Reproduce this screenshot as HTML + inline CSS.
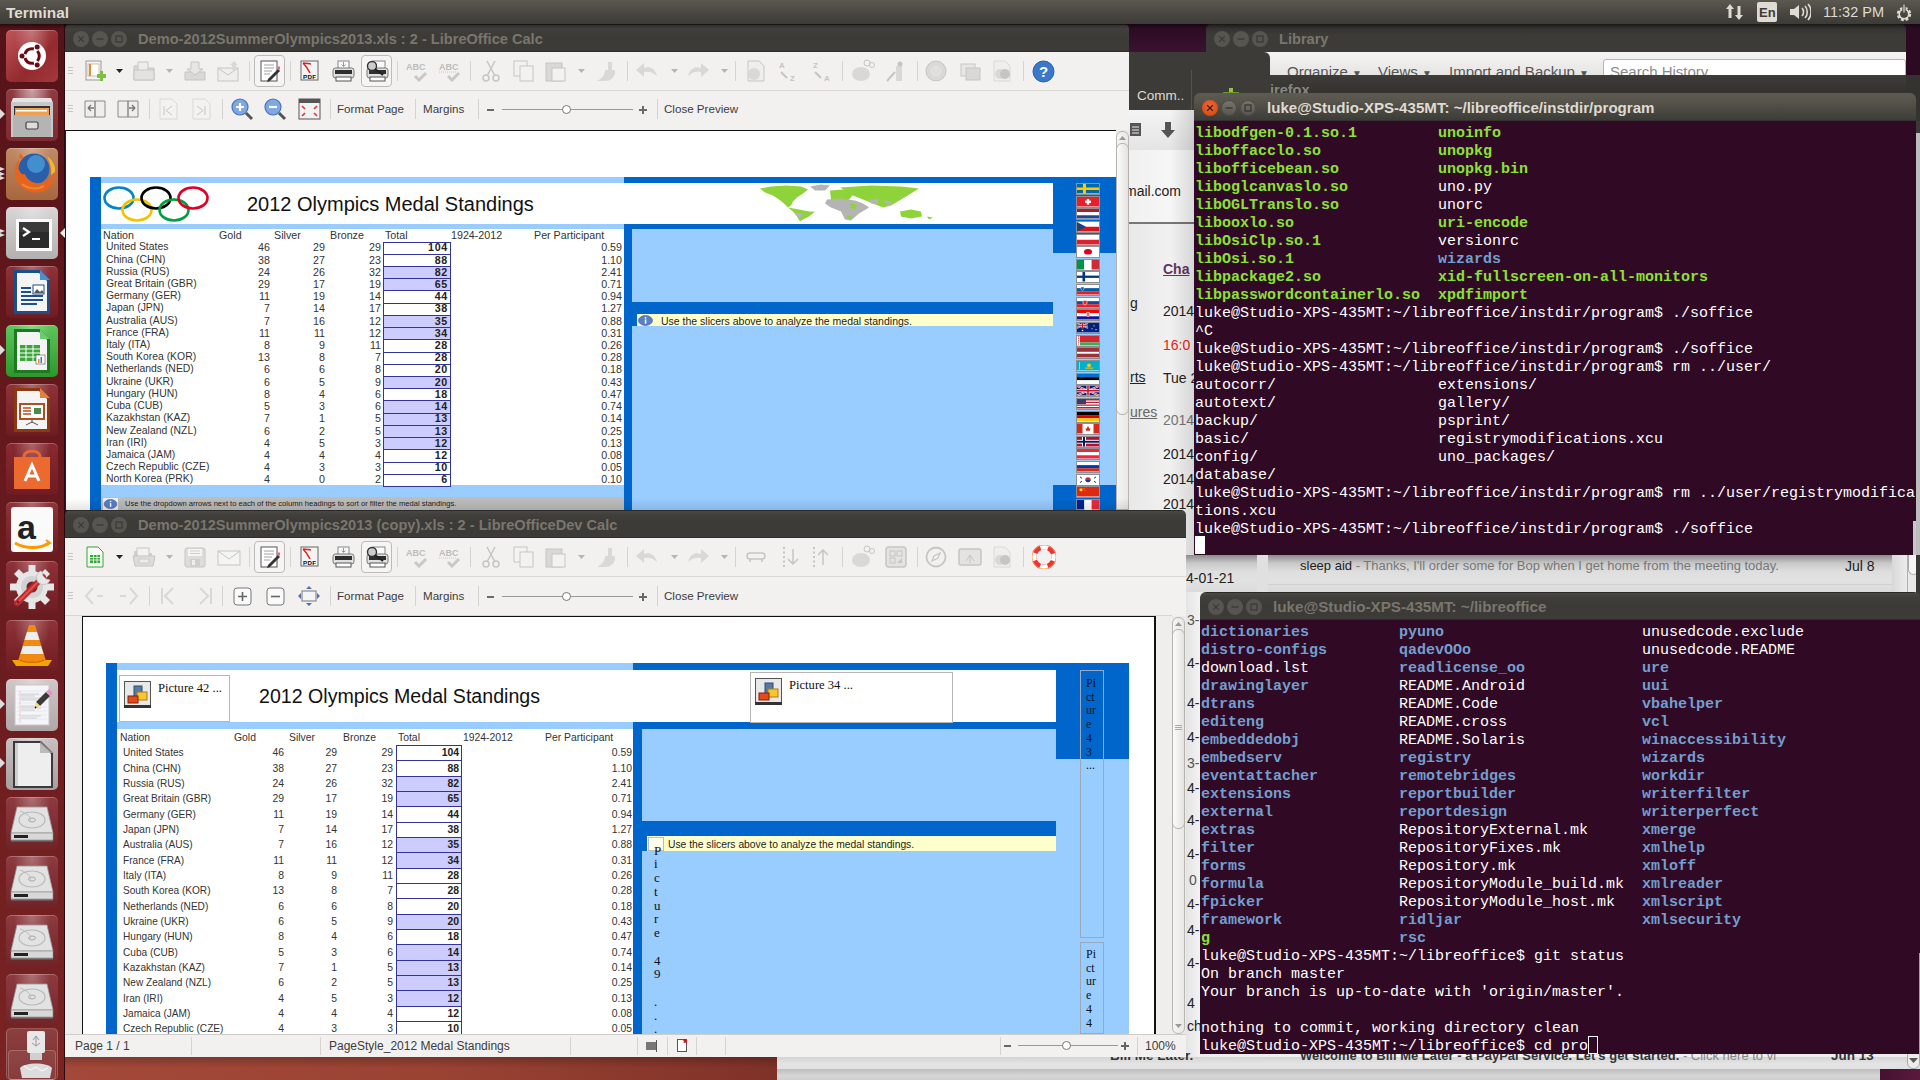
<!DOCTYPE html><html><head><meta charset="utf-8"><style>
*{box-sizing:border-box}
body{margin:0;width:1920px;height:1080px;overflow:hidden;position:relative;font-family:"Liberation Sans",sans-serif;background:#2c0b22}
.a{position:absolute}
.tb{position:absolute;background:linear-gradient(#2b2a26 0,#2b2a26 1px,#4a4843 1px,#403f3b 5px,#3c3b37 40%,#3c3b37 calc(100% - 1px),#2e2d29 calc(100% - 1px))}
.tbf{position:absolute;background:linear-gradient(#5e5b53,#57544c 30%,#47453f 70%,#3e3c38 calc(100% - 1px),#33322e calc(100% - 1px))}
.cb{position:absolute;width:16px;height:16px;border-radius:50%}
.cb svg{position:absolute;left:0;top:0}
.tt{position:absolute;font-weight:bold;font-size:14.6px;line-height:16px;margin-top:1px;color:#7a766e;white-space:nowrap}
.term{position:absolute;background:#300a24;font-family:"Liberation Mono",monospace;font-size:15px;line-height:18px;color:#fff;white-space:pre;overflow:hidden}
.g{color:#8ae234;font-weight:bold}
.bl{color:#729fcf;font-weight:bold}
.sep{position:absolute;width:1px;background:#d5d3cf}
</style></head><body><div class="a" style="left:0px;top:0px;width:1920px;height:1080px;background:#2c0b22;"></div><div class="a" style="left:1129px;top:24px;width:77px;height:28px;background:linear-gradient(#2a0a20,#3a1232);"></div><div class="a" style="left:65px;top:1040px;width:735px;height:40px;background:linear-gradient(90deg,#a4493a,#9a4333 50%,#7e3027);"></div><div class="a" style="left:65px;top:1057px;width:712px;height:11px;background:linear-gradient(rgba(0,0,0,.22),rgba(0,0,0,0));"></div><div class="a" style="left:1129px;top:110px;width:791px;height:970px;background:linear-gradient(90deg,#e9e9e9,#f5f5f5 40%,#ececec);"></div><div class="a" style="left:777px;top:1057px;width:1143px;height:23px;background:linear-gradient(#d4d4d4,#e4e4e4 30%,#e0e0e0 60%,#c4c4c4);"></div><div class="a" style="left:1880px;top:1069px;width:40px;height:11px;background:linear-gradient(90deg,#44122f,#5a1a3e);"></div><div class="a" style="left:777px;top:1069px;width:1103px;height:11px;background:linear-gradient(#bcbcbc,#d6d6d6 60%,#cfcfcf);"></div><div class="a" style="left:1907px;top:1040px;width:13px;height:29px;border:1px solid #a8a8a8;border-radius:0 0 6px 6px;background:#ececec"></div><svg class="a" style="left:1909px;top:1058px" width="9" height="6"><path d="M0 0h9L4.5 5z" fill="#555"/></svg><div class="a" style="left:1240px;top:52px;width:40px;height:23px;background:#eeeeec;"></div><div class="a" style="left:1129px;top:52px;width:141px;height:58px;background:#3c3b37;border-radius:0 6px 0 0"></div><div class="a" style="left:1137px;top:89px;font-size:13.5px;color:#dfdbd2;white-space:nowrap;line-height:1;">Comm..</div><div class="a" style="left:1191px;top:70px;width:1px;height:40px;background:#55534d;"></div><div class="a" style="left:1229px;top:88px;width:4px;height:5px;background:#9ac048;"></div><div class="a" style="left:1223px;top:92px;width:16px;height:1px;background:#6a9a30;"></div><div class="a" style="left:1129px;top:110px;width:65px;height:40px;background:linear-gradient(#f4f4f4,#e4e4e4);"></div><svg class="a" style="left:1129px;top:120px" width="14" height="18"><rect x="1" y="3" width="11" height="13" fill="#555"/><path d="M3 7h7M3 10h7M3 13h7" stroke="#eee"/></svg><svg class="a" style="left:1160px;top:121px" width="16" height="18"><path d="M5 1h6v8h4l-7 8-7-8h4z" fill="#555"/></svg><div class="a" style="left:1129px;top:150px;width:65px;height:73px;background:linear-gradient(90deg,#f0f0f0,#fafafa);"></div><div class="a" style="left:1129px;top:150px;width:65px;height:73px;overflow:hidden"><div class="a" style="left:0px;top:34px;font-size:14px;color:#222;white-space:nowrap;line-height:1;right:13px;left:auto">mail.com</div></div><div class="a" style="left:1129px;top:222px;width:65px;height:2px;background:#777;"></div><div class="a" style="left:1129px;top:224px;width:65px;height:336px;background:linear-gradient(90deg,#e8e8e8,#f6f6f6);"></div><div class="a" style="left:1163px;top:262px;font-size:14px;color:#663366;white-space:nowrap;line-height:1;"><b><u>Cha</u></b></div><div class="a" style="left:1130px;top:296px;font-size:14px;color:#222;white-space:nowrap;line-height:1;"><u>g</u></div><div class="a" style="left:1130px;top:370px;font-size:14px;color:#222;white-space:nowrap;line-height:1;"><u>rts</u></div><div class="a" style="left:1130px;top:405px;font-size:14px;color:#666;white-space:nowrap;line-height:1;"><u>ures</u></div><div class="a" style="left:1163px;top:304px;font-size:14px;color:#222;white-space:nowrap;line-height:1;">2014</div><div class="a" style="left:1163px;top:338px;font-size:14px;color:#e21;white-space:nowrap;line-height:1;">16:0</div><div class="a" style="left:1163px;top:371px;font-size:14px;color:#222;white-space:nowrap;line-height:1;">Tue 2</div><div class="a" style="left:1163px;top:413px;font-size:14px;color:#777;white-space:nowrap;line-height:1;">2014</div><div class="a" style="left:1163px;top:447px;font-size:14px;color:#222;white-space:nowrap;line-height:1;">2014</div><div class="a" style="left:1163px;top:472px;font-size:14px;color:#222;white-space:nowrap;line-height:1;">2014</div><div class="a" style="left:1163px;top:497px;font-size:14px;color:#222;white-space:nowrap;line-height:1;">2014</div><div class="a" style="left:1163px;top:528px;font-size:14px;color:#222;white-space:nowrap;line-height:1;">4</div><div class="a" style="left:1170px;top:110px;width:24px;height:445px;background:linear-gradient(90deg,rgba(0,0,0,0),rgba(0,0,0,.13));"></div><div class="a" style="left:1186px;top:555px;width:734px;height:37px;background:linear-gradient(#8c8c8c,#c8c8c8 22%,#dedede 45%,#e2e2e2 70%,#dadada);"></div><div class="a" style="left:1268px;top:584px;width:624px;height:1px;background:#cfcfcf;"></div><div class="a" style="left:1892px;top:555px;width:15px;height:37px;background:linear-gradient(90deg,#d8d8d8,#ececec);"></div><div class="a" style="left:1907px;top:555px;width:13px;height:37px;background:#e8e8e8;border-left:1px solid #b0b0b0"></div><div class="a" style="left:1908px;top:540px;width:11px;height:35px;border:1px solid #a8a8a8;border-radius:0 0 6px 6px;background:#f4f4f4"></div><div class="a" style="left:1257px;top:555px;width:11px;height:37px;background:#e0e0e0;"></div><div class="a" style="left:1300px;top:559px;font-size:13px;color:#222;white-space:nowrap;line-height:1;">sleep aid <span style="color:#777">- Thanks, I'll order some for Bop when I get home from the meeting today.</span></div><div class="a" style="left:1845px;top:559px;font-size:14px;color:#222;white-space:nowrap;line-height:1;">Jul 8</div><div class="a" style="left:1186px;top:592px;width:14px;height:465px;background:linear-gradient(90deg,#e4e4e4,#f2f2f2);"></div><div class="a" style="left:1186px;top:571px;font-size:14px;color:#222;white-space:nowrap;line-height:1;">4-01-21</div><div class="a" style="left:1187px;top:613px;font-size:14px;color:#555;white-space:nowrap;line-height:1;">3-</div><div class="a" style="left:1187px;top:656px;font-size:14px;color:#222;white-space:nowrap;line-height:1;">4-</div><div class="a" style="left:1187px;top:696px;font-size:14px;color:#222;white-space:nowrap;line-height:1;">4-</div><div class="a" style="left:1187px;top:730px;font-size:14px;color:#222;white-space:nowrap;line-height:1;">4-</div><div class="a" style="left:1187px;top:756px;font-size:14px;color:#555;white-space:nowrap;line-height:1;">3-</div><div class="a" style="left:1187px;top:781px;font-size:14px;color:#222;white-space:nowrap;line-height:1;">4-</div><div class="a" style="left:1187px;top:813px;font-size:14px;color:#222;white-space:nowrap;line-height:1;">4-</div><div class="a" style="left:1187px;top:847px;font-size:14px;color:#222;white-space:nowrap;line-height:1;">4-</div><div class="a" style="left:1189px;top:873px;font-size:14px;color:#555;white-space:nowrap;line-height:1;">0</div><div class="a" style="left:1187px;top:897px;font-size:14px;color:#222;white-space:nowrap;line-height:1;">4-</div><div class="a" style="left:1187px;top:923px;font-size:14px;color:#222;white-space:nowrap;line-height:1;">4-</div><div class="a" style="left:1187px;top:956px;font-size:14px;color:#222;white-space:nowrap;line-height:1;">4-</div><div class="a" style="left:1187px;top:996px;font-size:14px;color:#222;white-space:nowrap;line-height:1;">4</div><div class="a" style="left:1187px;top:1019px;font-size:14px;color:#222;white-space:nowrap;line-height:1;">ch</div><div class="a" style="left:1110px;top:1049px;font-size:13.5px;color:#333;white-space:nowrap;line-height:1;font-weight:bold">Bill Me Later.</div><div class="a" style="left:1300px;top:1049px;font-size:13px;color:#333;white-space:nowrap;line-height:1;font-weight:bold">Welcome to Bill Me Later - a PayPal Service. Let's get started. <span style="color:#888;font-weight:normal">- Click here to vi</span></div><div class="a" style="left:1831px;top:1049px;font-size:13.5px;color:#333;white-space:nowrap;line-height:1;font-weight:bold">Jun 13</div><div class="a" style="left:1206px;top:24px;width:700px;height:28px;background:linear-gradient(#2f2e2a,#3c3b37 40%);border-radius:5px 5px 0 0"></div><div class="cb" style="left:1213.5px;top:30.5px;background:#56554f"><svg width="16" height="16"><path d="M5.2 5.2L10.8 10.8M10.8 5.2L5.2 10.8" stroke="#3a3935" stroke-width="1.1"/></svg></div><div class="cb" style="left:1232.5px;top:30.5px;background:#56554f"><svg width="16" height="16"><path d="M4.5 8H11.5" stroke="#3a3935" stroke-width="1.3"/></svg></div><div class="cb" style="left:1251.5px;top:30.5px;background:#56554f"><svg width="16" height="16"><rect x="5" y="5" width="6" height="6" fill="none" stroke="#3a3935" stroke-width="1.2"/></svg></div><div class="tt" style="left:1279px;top:30px">Library</div><div class="a" style="left:1270px;top:52px;width:636px;height:23px;background:linear-gradient(#f4f4f3,#e6e5e3);"></div><div class="a" style="left:1270px;top:52px;width:636px;height:23px;overflow:hidden"><div class="a" style="left:17px;top:12px;font-size:15px;color:#555;white-space:nowrap;line-height:1;">Organize <span style="font-size:10px">▼</span></div><div class="a" style="left:108px;top:12px;font-size:15px;color:#555;white-space:nowrap;line-height:1;">Views <span style="font-size:10px">▼</span></div><div class="a" style="left:179px;top:12px;font-size:15px;color:#555;white-space:nowrap;line-height:1;">Import and Backup <span style="font-size:10px">▼</span></div><div class="a" style="left:333px;top:7px;width:303px;height:24px;border:1px solid #b8b6b2;border-radius:3px;background:#fff"></div><div class="a" style="left:340px;top:12px;font-size:15px;color:#8a8a8a;white-space:nowrap;line-height:1;">Search History</div></div><div class="a" style="left:1270px;top:75px;width:649px;height:18px;background:linear-gradient(#3e3d39,#33322e);border-radius:0 5px 0 0"></div><div class="a" style="left:1270px;top:83px;font-size:14.5px;color:#8a867e;white-space:nowrap;line-height:1;font-weight:bold">irefox</div><div class="a" style="left:1906px;top:75px;width:14px;height:58px;background:#34332f;"></div><div class="a" style="left:1916px;top:121px;width:4px;height:919px;background:#3a3935;"></div><div class="a" style="left:1916px;top:133px;width:4px;height:422px;background:#bdbdbd;"></div><div class="a" style="left:65px;top:52px;width:1064px;height:458px;background:#f2f1f0;"></div><div class="tb" style="left:65px;top:24px;width:1064px;height:28px;border-radius:5px 5px 0 0"></div><div class="cb" style="left:72.5px;top:30.5px;background:#56554f"><svg width="16" height="16"><path d="M5.2 5.2L10.8 10.8M10.8 5.2L5.2 10.8" stroke="#3a3935" stroke-width="1.1"/></svg></div><div class="cb" style="left:91.5px;top:30.5px;background:#56554f"><svg width="16" height="16"><path d="M4.5 8H11.5" stroke="#3a3935" stroke-width="1.3"/></svg></div><div class="cb" style="left:110.5px;top:30.5px;background:#56554f"><svg width="16" height="16"><rect x="5" y="5" width="6" height="6" fill="none" stroke="#3a3935" stroke-width="1.2"/></svg></div><div class="tt" style="left:138px;top:30px">Demo-2012SummerOlympics2013.xls : 2 - LibreOffice Calc</div><div class="a" style="left:65px;top:52px;width:1064px;height:38px;background:#f2f1f0;"></div><div class="a" style="left:65px;top:90px;width:1064px;height:1px;background:#dad8d4;"></div><div class="a" style="left:68px;top:67px;width:5px;height:9px;background:repeating-linear-gradient(#c9c7c3 0 1px,transparent 1px 3px)"></div><svg class="a" style="left:85px;top:60px" width="22" height="22" viewBox="0 0 22 22"><rect x="1" y="1" width="15" height="19" fill="#f4f4f2" stroke="#9a9a98"/><rect x="3" y="4" width="11" height="12" fill="#fff" stroke="#c8b49a" stroke-width=".8"/><rect x="4" y="4" width="2" height="12" fill="#e58b3a"/><path d="M12 14h9v4h-9zM15 11h3v10h-3z" fill="#7bc043"/></svg><svg class="a" style="left:115px;top:68px" width="9" height="6" viewBox="0 0 9 6"><path d="M1 1h7l-3.5 4z" fill="#222"/></svg><svg class="a" style="left:132px;top:60px" width="24" height="22" viewBox="0 0 24 22"><path d="M2 6h8l2 2h10v12H2z" fill="#d9d8d6" stroke="#c6c5c2"/><rect x="6" y="2" width="10" height="10" fill="#eeedeb" stroke="#c6c5c2"/><path d="M2 10h20v10H2z" fill="#e3e2e0" stroke="#c6c5c2"/></svg><svg class="a" style="left:165px;top:68px" width="9" height="6" viewBox="0 0 9 6"><path d="M1 1h7l-3.5 4z" fill="#b5b4b1"/></svg><svg class="a" style="left:183px;top:60px" width="24" height="22" viewBox="0 0 24 22"><path d="M2 12h20v8H2z" fill="#d9d8d6" stroke="#c6c5c2"/><path d="M8 2h8v7h4l-8 6-8-6h4z" fill="#e6e5e3" stroke="#c6c5c2"/></svg><svg class="a" style="left:217px;top:60px" width="24" height="22" viewBox="0 0 24 22"><rect x="1" y="8" width="20" height="13" fill="#efeeec" stroke="#c6c5c2"/><path d="M1 8l10 7 10-7" fill="none" stroke="#c6c5c2"/><path d="M17 1l4 4h-2v5h-4V5h-2z" fill="#d9d8d6"/></svg><div class="sep" style="left:249px;top:61px;height:20px"></div><div class="a" style="left:254px;top:55px;width:31px;height:32px;border:1px solid #bdbbb7;border-radius:4px;background:#f6f5f4"></div><svg class="a" style="left:260px;top:60px" width="20" height="22" viewBox="0 0 20 22"><rect x="1" y="1" width="16" height="20" fill="#fff" stroke="#555"/><path d="M4 5h10M4 8h10M4 11h8M4 14h6" stroke="#888" stroke-width=".8"/><path d="M8 19l10-10 2 2-10 10-3 1z" fill="#333"/><path d="M17 8l2-2 2 2-2 2z" fill="#d6a"/></svg><div class="sep" style="left:290px;top:61px;height:20px"></div><svg class="a" style="left:300px;top:60px" width="20" height="22" viewBox="0 0 20 22"><rect x="1" y="1" width="17" height="19" fill="#f4f4f4" stroke="#666"/><path d="M3 3c3 0 6 1 8 1M3 3c2 2 5 6 7 10" stroke="#e02020" stroke-width="1.6" fill="none"/><text x="3" y="18.5" font-size="6.2" font-weight="bold" fill="#111" font-family="Liberation Sans" letter-spacing=".3">PDF</text></svg><svg class="a" style="left:332px;top:60px" width="23" height="22" viewBox="0 0 23 22"><rect x="6" y="1" width="11" height="8" fill="#fafafa" stroke="#888"/><path d="M11.5 2v4M9.5 4.5l2 2 2-2" stroke="#999" fill="none"/><rect x="1" y="8" width="21" height="10" rx="2.5" fill="#e0e0e0" stroke="#777"/><rect x="3" y="10" width="17" height="4" fill="#2e2e2e"/><rect x="4" y="17" width="15" height="4" fill="#fff" stroke="#555"/></svg><div class="a" style="left:361px;top:55px;width:31px;height:32px;border:1px solid #bdbbb7;border-radius:4px;background:#f6f5f4"></div><svg class="a" style="left:366px;top:60px" width="23" height="22" viewBox="0 0 23 22"><rect x="7" y="1" width="12" height="8" fill="#fafafa" stroke="#888"/><rect x="1" y="8" width="21" height="10" rx="2.5" fill="#e0e0e0" stroke="#777"/><rect x="3" y="10" width="17" height="4" fill="#2e2e2e"/><rect x="4" y="17" width="15" height="4" fill="#fff" stroke="#555"/><circle cx="6" cy="6" r="4.5" fill="#ccc" stroke="#333" stroke-width="1.4"/><path d="M9 9l8 6" stroke="#222" stroke-width="2"/></svg><div class="sep" style="left:397px;top:61px;height:20px"></div><svg class="a" style="left:405px;top:60px" width="24" height="22" viewBox="0 0 24 22"><text x="1" y="10" font-size="9" font-weight="bold" fill="#bdbcb9" font-family="Liberation Sans">ABC</text><path d="M10 16l4 4 7-7" stroke="#c9c8c5" stroke-width="3" fill="none"/></svg><svg class="a" style="left:438px;top:60px" width="24" height="22" viewBox="0 0 24 22"><text x="1" y="10" font-size="9" font-weight="bold" fill="#bdbcb9" font-family="Liberation Sans">ABC</text><path d="M1 12h18" stroke="#c9c8c5" stroke-dasharray="1 1"/><path d="M10 16l4 4 7-7" stroke="#c9c8c5" stroke-width="3" fill="none"/></svg><div class="sep" style="left:470px;top:61px;height:20px"></div><svg class="a" style="left:482px;top:60px" width="18" height="22" viewBox="0 0 18 22"><circle cx="4" cy="18" r="3" fill="none" stroke="#c6c5c2" stroke-width="1.5"/><circle cx="14" cy="18" r="3" fill="none" stroke="#c6c5c2" stroke-width="1.5"/><path d="M5 16L13 1M13 16L5 1" stroke="#c6c5c2" stroke-width="1.5"/></svg><svg class="a" style="left:513px;top:60px" width="22" height="22" viewBox="0 0 22 22"><rect x="1" y="1" width="13" height="15" fill="#f3f2f0" stroke="#c6c5c2"/><rect x="7" y="6" width="13" height="15" fill="#f3f2f0" stroke="#c6c5c2"/></svg><svg class="a" style="left:545px;top:60px" width="22" height="22" viewBox="0 0 22 22"><rect x="1" y="3" width="16" height="18" fill="#d9d8d6" stroke="#c6c5c2"/><rect x="7" y="8" width="13" height="13" fill="#f3f2f0" stroke="#c6c5c2"/></svg><svg class="a" style="left:577px;top:68px" width="9" height="6" viewBox="0 0 9 6"><path d="M1 1h7l-3.5 4z" fill="#b5b4b1"/></svg><svg class="a" style="left:596px;top:60px" width="22" height="22" viewBox="0 0 22 22"><path d="M12 2h4v8h-4z" fill="#d9d8d6"/><path d="M9 10h10v4c-2 4-4 7-10 7-4 0-7 0-8 0 4-2 8-5 8-11z" fill="#d9d8d6"/></svg><div class="sep" style="left:627px;top:61px;height:20px"></div><svg class="a" style="left:635px;top:60px" width="24" height="22" viewBox="0 0 24 22"><path d="M22 16C20 8 14 6 9 8V3L1 10l8 7v-5c5-1 9 0 13 4z" fill="#d9d8d6"/></svg><svg class="a" style="left:670px;top:68px" width="9" height="6" viewBox="0 0 9 6"><path d="M1 1h7l-3.5 4z" fill="#b5b4b1"/></svg><svg class="a" style="left:686px;top:60px" width="24" height="22" viewBox="0 0 24 22"><path d="M2 16C4 8 10 6 15 8V3l8 7-8 7v-5c-5-1-9 0-13 4z" fill="#d9d8d6"/></svg><svg class="a" style="left:720px;top:68px" width="9" height="6" viewBox="0 0 9 6"><path d="M1 1h7l-3.5 4z" fill="#b5b4b1"/></svg><div class="sep" style="left:735px;top:61px;height:20px"></div><svg class="a" style="left:745px;top:60px" width="22" height="22" viewBox="0 0 22 22"><path d="M3 1h11l5 5v15H3z" fill="#efeeec" stroke="#c6c5c2"/><circle cx="9" cy="14" r="6" fill="#d9d8d6"/></svg><svg class="a" style="left:778px;top:60px" width="22" height="22" viewBox="0 0 22 22"><text x="1" y="8" font-size="8" fill="#c6c5c2" font-family="Liberation Sans" font-weight="bold">A</text><text x="12" y="21" font-size="8" fill="#c6c5c2" font-family="Liberation Sans" font-weight="bold">Z</text><path d="M3 12l6 6" stroke="#c6c5c2" stroke-width="2"/></svg><svg class="a" style="left:812px;top:60px" width="22" height="22" viewBox="0 0 22 22"><text x="1" y="8" font-size="8" fill="#c6c5c2" font-family="Liberation Sans" font-weight="bold">Z</text><text x="12" y="21" font-size="8" fill="#c6c5c2" font-family="Liberation Sans" font-weight="bold">A</text><path d="M3 12l6 6" stroke="#c6c5c2" stroke-width="2"/></svg><div class="sep" style="left:842px;top:61px;height:20px"></div><svg class="a" style="left:851px;top:59px" width="24" height="24" viewBox="0 0 24 24"><ellipse cx="10" cy="15" rx="9" ry="7" fill="#d9d8d6"/><circle cx="16" cy="4" r="3" fill="none" stroke="#c6c5c2"/><circle cx="21" cy="6" r="2.5" fill="none" stroke="#c6c5c2"/></svg><svg class="a" style="left:886px;top:60px" width="22" height="22" viewBox="0 0 22 22"><path d="M10 6h6v15h-6z" fill="#d9d8d6"/><path d="M1 21L9 12" stroke="#c6c5c2" stroke-width="2"/><circle cx="14" cy="4" r="2.5" fill="#c6c5c2"/></svg><div class="sep" style="left:917px;top:61px;height:20px"></div><svg class="a" style="left:925px;top:60px" width="22" height="22" viewBox="0 0 22 22"><circle cx="11" cy="11" r="10" fill="#d9d8d6" stroke="#c6c5c2"/><circle cx="11" cy="11" r="6" fill="#e0dfdd"/></svg><svg class="a" style="left:960px;top:60px" width="22" height="22" viewBox="0 0 22 22"><rect x="1" y="4" width="14" height="12" fill="#e8e7e5" stroke="#c6c5c2"/><rect x="6" y="8" width="14" height="12" fill="#d9d8d6" stroke="#c6c5c2"/></svg><svg class="a" style="left:991px;top:60px" width="22" height="22" viewBox="0 0 22 22"><path d="M3 1h11l5 5v15H3z" fill="#efeeec" stroke="#d9d8d6"/><circle cx="9" cy="14" r="5" fill="#d9d8d6"/><circle cx="14" cy="14" r="5" fill="#c6c5c2"/></svg><div class="sep" style="left:1023px;top:61px;height:20px"></div><svg class="a" style="left:1032px;top:60px" width="23" height="23"><circle cx="11.5" cy="11.5" r="10.5" fill="#3b78c9" stroke="#245ea8"/><text x="7" y="17" font-size="15" font-weight="bold" fill="#fff" font-family="Liberation Sans">?</text></svg><div class="a" style="left:68px;top:105px;width:5px;height:9px;background:repeating-linear-gradient(#c9c7c3 0 1px,transparent 1px 3px)"></div><svg class="a" style="left:84px;top:99px" width="22" height="20" viewBox="0 0 22 20"><path d="M1 2h10v16H1zM11 2h10v16H11z" fill="#eeeeec" stroke="#8a8a88"/><path d="M4 9h6M4 9l3-3M4 9l3 3" stroke="#777" stroke-width="1.4" fill="none"/></svg><svg class="a" style="left:117px;top:99px" width="22" height="20" viewBox="0 0 22 20"><path d="M1 2h10v16H1zM11 2h10v16H11z" fill="#eeeeec" stroke="#8a8a88"/><path d="M12 9h6M18 9l-3-3M18 9l-3 3" stroke="#777" stroke-width="1.4" fill="none"/></svg><div class="sep" style="left:149px;top:99px;height:20px"></div><svg class="a" style="left:159px;top:98px" width="19" height="22" viewBox="0 0 19 22"><path d="M1 1h12l5 5v15H1z" fill="#f3f2f0" stroke="#d9d8d6"/><path d="M5 8v9M13 8l-6 4.5 6 4.5" stroke="#c6c5c2" fill="none"/></svg><svg class="a" style="left:192px;top:98px" width="19" height="22" viewBox="0 0 19 22"><path d="M1 1h12l5 5v15H1z" fill="#f3f2f0" stroke="#d9d8d6"/><path d="M13 8v9M5 8l6 4.5-6 4.5" stroke="#c6c5c2" fill="none"/></svg><div class="sep" style="left:222px;top:99px;height:20px"></div><svg class="a" style="left:231px;top:98px" width="23" height="23" viewBox="0 0 23 23"><circle cx="9" cy="9" r="8" fill="#7fa7e0" stroke="#4a73b5" stroke-width="1.2"/><path d="M9 5v8M5 9h8" stroke="#fff" stroke-width="2.2"/><path d="M15 15l6 6" stroke="#555" stroke-width="3"/></svg><svg class="a" style="left:264px;top:98px" width="23" height="23" viewBox="0 0 23 23"><circle cx="9" cy="9" r="8" fill="#7fa7e0" stroke="#4a73b5" stroke-width="1.2"/><path d="M5 9h8" stroke="#fff" stroke-width="2.2"/><path d="M15 15l6 6" stroke="#555" stroke-width="3"/></svg><svg class="a" style="left:298px;top:98px" width="23" height="22" viewBox="0 0 23 22"><rect x="1" y="1" width="21" height="20" fill="#f2f2f2" stroke="#555"/><rect x="1" y="1" width="21" height="4" fill="#555"/><path d="M4 8l3 3M19 8l-3 3M4 18l3-3M19 18l-3-3" stroke="#d33" stroke-width="1.6"/></svg><div class="sep" style="left:330px;top:99px;height:20px"></div><div class="a" style="left:337px;top:103px;font-size:11.6px;color:#3c3c3c;white-space:nowrap;line-height:1;">Format Page</div><div class="sep" style="left:415px;top:99px;height:20px"></div><div class="a" style="left:423px;top:103px;font-size:11.6px;color:#3c3c3c;white-space:nowrap;line-height:1;">Margins</div><div class="sep" style="left:478px;top:99px;height:20px"></div><div class="a" style="left:487px;top:109px;width:7px;height:2px;background:#6a6a6a;"></div><div class="a" style="left:502px;top:109px;width:131px;height:1px;background:#9a9996;"></div><div class="a" style="left:562px;top:105px;width:9px;height:9px;border-radius:50%;background:#fff;border:1px solid #777"></div><div class="a" style="left:639px;top:109px;width:8px;height:2px;background:#6a6a6a;"></div><div class="a" style="left:642px;top:106px;width:2px;height:8px;background:#6a6a6a;"></div><div class="sep" style="left:657px;top:99px;height:20px"></div><div class="a" style="left:664px;top:103px;font-size:11.6px;color:#3c3c3c;white-space:nowrap;line-height:1;">Close Preview</div><div class="a" style="left:65px;top:130px;width:1051px;height:380px;background:#fff;"></div><div class="a" style="left:65px;top:130px;width:1051px;height:1px;background:#111;"></div><div class="a" style="left:65px;top:130px;width:1px;height:380px;background:#222;"></div><div class="a" style="left:1116px;top:130px;width:13px;height:380px;background:#eceae7;"></div><div class="a" style="left:1116px;top:131px;width:13px;height:379px;border:1px solid #bab7b2;border-radius:6px 6px 0 0;background:linear-gradient(90deg,#f4f4f3,#e9e8e6)"></div><svg class="a" style="left:1119px;top:136px" width="7" height="5"><path d="M0 4L3.5 0L7 4z" fill="#999"/></svg><div class="a" style="left:1116px;top:143px;width:13px;height:272px;border:1px solid #b5b2ad;border-radius:6px;background:linear-gradient(90deg,#fbfbfb,#e4e3e1)"></div><div class="a" style="left:90px;top:177px;width:11px;height:333px;background:#0066cc;"></div><div class="a" style="left:101px;top:177px;width:523px;height:6px;background:#99ccff;"></div><div class="a" style="left:624px;top:177px;width:492px;height:6px;background:#0066cc;"></div><div class="a" style="left:101px;top:183px;width:952px;height:41px;background:#fff;"></div><div class="a" style="left:101px;top:224px;width:523px;height:5px;background:#99ccff;"></div><div class="a" style="left:624px;top:224px;width:429px;height:5px;background:#0066cc;"></div><div class="a" style="left:1053px;top:183px;width:63px;height:70px;background:#0066cc;"></div><div class="a" style="left:1053px;top:253px;width:63px;height:257px;background:#99ccff;"></div><div class="a" style="left:1053px;top:485px;width:63px;height:25px;background:#0066cc;"></div><div class="a" style="left:101px;top:229px;width:523px;height:256px;background:#fff;"></div><div class="a" style="left:624px;top:229px;width:8px;height:281px;background:#0066cc;"></div><div class="a" style="left:632px;top:229px;width:421px;height:73px;background:#99ccff;"></div><div class="a" style="left:632px;top:302px;width:421px;height:12px;background:#0066cc;"></div><div class="a" style="left:632px;top:314px;width:5px;height:12px;background:#0066cc;"></div><div class="a" style="left:637px;top:314px;width:416px;height:12px;background:#ffffcc;"></div><div class="a" style="left:632px;top:326px;width:421px;height:184px;background:#99ccff;"></div><div class="a" style="left:101px;top:485px;width:523px;height:12px;background:#99ccff;"></div><div class="a" style="left:101px;top:497px;width:523px;height:13px;background:#bdbdbd;"></div><div class="a" style="left:103px;top:498px;width:15px;height:12px;background:#f0f0f0;"></div><svg class="a" style="left:103px;top:499px" width="15" height="10" viewBox="0 0 15 11"><ellipse cx="7.5" cy="5.5" rx="7" ry="5" fill="#5b7fc7" stroke="#3b5da0" stroke-width="0.6"/><rect x="6.8" y="4.5" width="1.6" height="4.2" fill="#fff"/><circle cx="7.6" cy="2.8" r="0.9" fill="#fff"/></svg><div class="a" style="left:125px;top:500px;font-size:7.6px;color:#222;white-space:nowrap;line-height:1;">Use the dropdown arrows next to each of the column headings to sort or filter the medal standings.</div><svg class="a" style="left:103px;top:186px" width="108" height="36" viewBox="0 0 108 36"><g fill="none" stroke-width="2.6"><ellipse cx="16" cy="12" rx="14.5" ry="10.5" stroke="#0085c7"/><ellipse cx="34" cy="24" rx="14.5" ry="10.5" stroke="#f4c300"/><ellipse cx="53" cy="12" rx="14.5" ry="10.5" stroke="#000"/><ellipse cx="71" cy="24" rx="14.5" ry="10.5" stroke="#009f3d"/><ellipse cx="90" cy="12" rx="14.5" ry="10.5" stroke="#df0024"/></g></svg><div class="a" style="left:247px;top:194px;font-size:20px;color:#111;white-space:nowrap;line-height:1;">2012 Olympics Medal Standings</div><svg class="a" style="left:751px;top:183px" width="190" height="39" viewBox="0 0 190 38"><path d="M9 5L20 3L35 2L50 3L57 6L52 10L46 14L42 18L40 22L37 24L33 20L28 16L22 12L14 9Z" fill="#8ed339"/><path d="M37 24L48 26L58 28L64 28L58 33L52 36L49 38L46 33L42 28Z" fill="#8ed339"/><path d="M44 29L52 30L50 35L46 33Z" fill="#b4b4b4"/><path d="M59 3L70 1L79 2L74 7L64 7Z" fill="#b4b4b4"/><path d="M79 7L92 6L104 8L100 14L96 18L88 20L80 16Z" fill="#8ed339"/><path d="M89 4L120 2L150 3L168 5L160 10L150 16L140 22L132 24L122 20L112 16L102 12Z" fill="#8ed339"/><path d="M76 16L90 15L104 17L112 20L118 24L108 30L100 37L94 36L90 28L80 24L74 20Z" fill="#b4b4b4"/><path d="M100 20L106 21L104 26L99 24Z" fill="#8ed339"/><path d="M95 33L101 32L100 36Z" fill="#8ed339"/><path d="M118 16L128 15L126 21L120 20Z" fill="#b4b4b4"/><path d="M132 17L142 18L138 23Z" fill="#b4b4b4"/><path d="M149 28L160 26L170 28L171 33L160 35L150 33Z" fill="#8ed339"/><path d="M176 33L182 34L178 36Z" fill="#8ed339"/></svg><div class="a" style="left:1076px;top:183px;width:24px;height:11.5px;border:1px solid #8d8f94;background:#fff"></div><svg class="a" style="left:1077px;top:184px" width="22" height="9.5" viewBox="0 0 22 10" preserveAspectRatio="none"><rect width="22" height="10" fill="#006aa7"/><rect x="6" width="3" height="10" fill="#fecc00"/><rect y="3.7" width="22" height="2.6" fill="#fecc00"/></svg><div class="a" style="left:1076px;top:196px;width:24px;height:11.5px;border:1px solid #8d8f94;background:#fff"></div><svg class="a" style="left:1077px;top:197px" width="22" height="9.5" viewBox="0 0 22 10" preserveAspectRatio="none"><rect width="22" height="10" fill="#e8202a"/><rect x="9.8" y="2" width="2.4" height="6" fill="#fff"/><rect x="8" y="3.8" width="6" height="2.4" fill="#fff"/></svg><div class="a" style="left:1076px;top:208px;width:24px;height:11.5px;border:1px solid #8d8f94;background:#fff"></div><svg class="a" style="left:1077px;top:209px" width="22" height="9.5" viewBox="0 0 22 10" preserveAspectRatio="none"><rect width="22" height="3.4" fill="#ae1c28"/><rect y="3.3" width="22" height="3.4" fill="#fff"/><rect y="6.6" width="22" height="3.4" fill="#21468b"/></svg><div class="a" style="left:1076px;top:221px;width:24px;height:11.5px;border:1px solid #8d8f94;background:#fff"></div><svg class="a" style="left:1077px;top:222px" width="22" height="9.5" viewBox="0 0 22 10" preserveAspectRatio="none"><rect width="22" height="5" fill="#fff"/><rect y="5" width="22" height="5" fill="#d7141a"/><path d="M0 0L9 5L0 10z" fill="#11457e"/></svg><div class="a" style="left:1076px;top:234px;width:24px;height:11.5px;border:1px solid #8d8f94;background:#fff"></div><svg class="a" style="left:1077px;top:235px" width="22" height="9.5" viewBox="0 0 22 10" preserveAspectRatio="none"><rect width="22" height="5" fill="#fff"/><rect y="5" width="22" height="5" fill="#e0202a"/></svg><div class="a" style="left:1076px;top:246px;width:24px;height:11.5px;border:1px solid #8d8f94;background:#fff"></div><svg class="a" style="left:1077px;top:247px" width="22" height="9.5" viewBox="0 0 22 10" preserveAspectRatio="none"><rect width="22" height="10" fill="#fff"/><ellipse cx="11" cy="5" rx="4" ry="3" fill="#e00020"/></svg><div class="a" style="left:1076px;top:259px;width:24px;height:11.5px;border:1px solid #8d8f94;background:#fff"></div><svg class="a" style="left:1077px;top:260px" width="22" height="9.5" viewBox="0 0 22 10" preserveAspectRatio="none"><rect width="7.4" height="10" fill="#009246"/><rect x="7.3" width="7.4" height="10" fill="#fff"/><rect x="14.6" width="7.4" height="10" fill="#ce2b37"/></svg><div class="a" style="left:1076px;top:271px;width:24px;height:11.5px;border:1px solid #8d8f94;background:#fff"></div><svg class="a" style="left:1077px;top:272px" width="22" height="9.5" viewBox="0 0 22 10" preserveAspectRatio="none"><rect width="22" height="10" fill="#fff"/><rect x="5.5" width="2.6" height="10" fill="#003580"/><rect y="3.8" width="22" height="2.4" fill="#003580"/></svg><div class="a" style="left:1076px;top:284px;width:24px;height:11.5px;border:1px solid #8d8f94;background:#fff"></div><svg class="a" style="left:1077px;top:285px" width="22" height="9.5" viewBox="0 0 22 10" preserveAspectRatio="none"><rect width="22" height="3.4" fill="#fff"/><rect y="3.3" width="22" height="3.4" fill="#005da4"/><rect y="6.6" width="22" height="3.4" fill="#ed1c24"/><path d="M4 2h3v2.5l-1.5 1.5-1.5-1.5z" fill="#005da4" stroke="#fff" stroke-width=".5"/></svg><div class="a" style="left:1076px;top:297px;width:24px;height:11.5px;border:1px solid #8d8f94;background:#fff"></div><svg class="a" style="left:1077px;top:298px" width="22" height="9.5" viewBox="0 0 22 10" preserveAspectRatio="none"><rect width="22" height="3.4" fill="#fff"/><rect y="3.3" width="22" height="3.4" fill="#0b4ea2"/><rect y="6.6" width="22" height="3.4" fill="#ee1c25"/><path d="M6 2.5h4v3.5l-2 1.5-2-1.5z" fill="#ee1c25" stroke="#fff" stroke-width=".6"/></svg><div class="a" style="left:1076px;top:309px;width:24px;height:11.5px;border:1px solid #8d8f94;background:#fff"></div><svg class="a" style="left:1077px;top:310px" width="22" height="9.5" viewBox="0 0 22 10" preserveAspectRatio="none"><rect width="22" height="3.4" fill="#ff0000"/><rect y="3.3" width="22" height="3.4" fill="#fff"/><rect y="6.6" width="22" height="3.4" fill="#171796"/><path d="M9.5 2.5h3v3.5l-1.5 1.2-1.5-1.2z" fill="#f66" stroke="#fff" stroke-width=".5"/></svg><div class="a" style="left:1076px;top:322px;width:24px;height:11.5px;border:1px solid #8d8f94;background:#fff"></div><svg class="a" style="left:1077px;top:323px" width="22" height="9.5" viewBox="0 0 22 10" preserveAspectRatio="none"><rect width="22" height="10" fill="#00247d"/><rect width="11" height="5.5" fill="#012169"/><path d="M0 0l11 5.5M11 0L0 5.5" stroke="#fff" stroke-width="1.4"/><path d="M0 0l11 5.5M11 0L0 5.5" stroke="#c8102e" stroke-width=".6"/><path d="M5.5 0v5.5M0 2.75h11" stroke="#fff" stroke-width="1.8"/><path d="M5.5 0v5.5M0 2.75h11" stroke="#c8102e" stroke-width="1"/><circle cx="5.5" cy="8" r=".8" fill="#fff"/><circle cx="17" cy="3" r=".6" fill="#fff"/><circle cx="15" cy="6" r=".6" fill="#fff"/><circle cx="19" cy="7" r=".6" fill="#fff"/></svg><div class="a" style="left:1076px;top:335px;width:24px;height:11.5px;border:1px solid #8d8f94;background:#fff"></div><svg class="a" style="left:1077px;top:336px" width="22" height="9.5" viewBox="0 0 22 10" preserveAspectRatio="none"><rect width="22" height="6.6" fill="#d22730"/><rect y="6.6" width="22" height="3.4" fill="#4aa657"/><rect width="3" height="10" fill="#fff"/><path d="M1.5 0v10" stroke="#d22730" stroke-dasharray="1 1"/></svg><div class="a" style="left:1076px;top:347px;width:24px;height:11.5px;border:1px solid #8d8f94;background:#fff"></div><svg class="a" style="left:1077px;top:348px" width="22" height="9.5" viewBox="0 0 22 10" preserveAspectRatio="none"><rect width="22" height="10" fill="#9e3039"/><rect y="4" width="22" height="2" fill="#fff"/></svg><div class="a" style="left:1076px;top:360px;width:24px;height:11.5px;border:1px solid #8d8f94;background:#fff"></div><svg class="a" style="left:1077px;top:361px" width="22" height="9.5" viewBox="0 0 22 10" preserveAspectRatio="none"><rect width="22" height="10" fill="#00afca"/><circle cx="12" cy="4.5" r="2" fill="#fec50c"/><path d="M8 7.5h8" stroke="#fec50c" stroke-width="1"/><rect x="2" y="1" width="1" height="8" fill="#fec50c"/></svg><div class="a" style="left:1076px;top:373px;width:24px;height:11.5px;border:1px solid #8d8f94;background:#fff"></div><svg class="a" style="left:1077px;top:374px" width="22" height="9.5" viewBox="0 0 22 10" preserveAspectRatio="none"><rect width="22" height="3.4" fill="#0072ce"/><rect y="3.3" width="22" height="3.4" fill="#000"/><rect y="6.6" width="22" height="3.4" fill="#fff"/></svg><div class="a" style="left:1076px;top:385px;width:24px;height:11.5px;border:1px solid #8d8f94;background:#fff"></div><svg class="a" style="left:1077px;top:386px" width="22" height="9.5" viewBox="0 0 22 10" preserveAspectRatio="none"><rect width="22" height="10" fill="#012169"/><path d="M0 0l22 10M22 0L0 10" stroke="#fff" stroke-width="2"/><path d="M0 0l22 10M22 0L0 10" stroke="#c8102e" stroke-width=".8"/><path d="M11 0v10M0 5h22" stroke="#fff" stroke-width="3"/><path d="M11 0v10M0 5h22" stroke="#c8102e" stroke-width="1.6"/></svg><div class="a" style="left:1076px;top:398px;width:24px;height:11.5px;border:1px solid #8d8f94;background:#fff"></div><svg class="a" style="left:1077px;top:399px" width="22" height="9.5" viewBox="0 0 22 10" preserveAspectRatio="none"><rect width="22" height="10" fill="#fff"/><path d="M0 .75h22M0 3.6h22M0 6.4h22M0 9.25h22" stroke="#b22234" stroke-width="1.4"/><rect width="9" height="5.4" fill="#3c3b6e"/></svg><div class="a" style="left:1076px;top:411px;width:24px;height:11.5px;border:1px solid #8d8f94;background:#fff"></div><svg class="a" style="left:1077px;top:412px" width="22" height="9.5" viewBox="0 0 22 10" preserveAspectRatio="none"><rect width="22" height="3.4" fill="#000"/><rect y="3.3" width="22" height="3.4" fill="#dd0000"/><rect y="6.6" width="22" height="3.4" fill="#ffce00"/></svg><div class="a" style="left:1076px;top:423px;width:24px;height:11.5px;border:1px solid #8d8f94;background:#fff"></div><svg class="a" style="left:1077px;top:424px" width="22" height="9.5" viewBox="0 0 22 10" preserveAspectRatio="none"><rect width="22" height="10" fill="#fff"/><rect width="5.5" height="10" fill="#d52b1e"/><rect x="16.5" width="5.5" height="10" fill="#d52b1e"/><path d="M11 2l1.5 3 1-.5-.5 2.5h-4l-.5-2.5 1 .5z" fill="#d52b1e"/></svg><div class="a" style="left:1076px;top:436px;width:24px;height:11.5px;border:1px solid #8d8f94;background:#fff"></div><svg class="a" style="left:1077px;top:437px" width="22" height="9.5" viewBox="0 0 22 10" preserveAspectRatio="none"><rect width="22" height="10" fill="#ba0c2f"/><rect x="5" width="4" height="10" fill="#fff"/><rect y="3" width="22" height="4" fill="#fff"/><rect x="6" width="2" height="10" fill="#00205b"/><rect y="4" width="22" height="2" fill="#00205b"/></svg><div class="a" style="left:1076px;top:448px;width:24px;height:11.5px;border:1px solid #8d8f94;background:#fff"></div><svg class="a" style="left:1077px;top:449px" width="22" height="9.5" viewBox="0 0 22 10" preserveAspectRatio="none"><rect width="22" height="3.4" fill="#ed2939"/><rect y="3.3" width="22" height="3.4" fill="#fff"/><rect y="6.6" width="22" height="3.4" fill="#ed2939"/></svg><div class="a" style="left:1076px;top:461px;width:24px;height:11.5px;border:1px solid #8d8f94;background:#fff"></div><svg class="a" style="left:1077px;top:462px" width="22" height="9.5" viewBox="0 0 22 10" preserveAspectRatio="none"><rect width="22" height="3.4" fill="#fff"/><rect y="3.3" width="22" height="3.4" fill="#0039a6"/><rect y="6.6" width="22" height="3.4" fill="#d52b1e"/></svg><div class="a" style="left:1076px;top:474px;width:24px;height:11.5px;border:1px solid #8d8f94;background:#fff"></div><svg class="a" style="left:1077px;top:475px" width="22" height="9.5" viewBox="0 0 22 10" preserveAspectRatio="none"><rect width="22" height="10" fill="#fff"/><circle cx="11" cy="5" r="2.6" fill="#cd2e3a"/><path d="M8.4 5a2.6 2.6 0 0 0 5.2 0z" fill="#0047a0"/><path d="M3 2l2 1.5M19 2l-2 1.5M3 8l2-1.5M19 8l-2-1.5" stroke="#000" stroke-width=".8"/></svg><div class="a" style="left:1076px;top:486px;width:24px;height:11.5px;border:1px solid #8d8f94;background:#fff"></div><svg class="a" style="left:1077px;top:487px" width="22" height="9.5" viewBox="0 0 22 10" preserveAspectRatio="none"><rect width="22" height="10" fill="#de2910"/><circle cx="4" cy="3" r="1.6" fill="#ffde00"/><circle cx="7" cy="1.5" r=".5" fill="#ffde00"/><circle cx="8" cy="3.5" r=".5" fill="#ffde00"/></svg><div class="a" style="left:1076px;top:499px;width:24px;height:11.5px;border:1px solid #8d8f94;background:#fff"></div><svg class="a" style="left:1077px;top:500px" width="22" height="9.5" viewBox="0 0 22 10" preserveAspectRatio="none"><rect width="7.4" height="10" fill="#002395"/><rect x="7.3" width="7.4" height="10" fill="#fff"/><rect x="14.6" width="7.4" height="10" fill="#ed2939"/></svg><svg class="a" style="left:638px;top:315px" width="15" height="11" viewBox="0 0 15 11"><ellipse cx="7.5" cy="5.5" rx="7" ry="5" fill="#5b7fc7" stroke="#3b5da0" stroke-width="0.6"/><rect x="6.8" y="4.5" width="1.6" height="4.2" fill="#fff"/><circle cx="7.6" cy="2.8" r="0.9" fill="#fff"/></svg><div class="a" style="left:661px;top:315.5px;font-size:10.5px;color:#222;white-space:nowrap;line-height:1;">Use the slicers above to analyze the medal standings.</div><div class="a" style="left:103px;top:230px;font-size:10.7px;color:#333;white-space:nowrap;line-height:1;">Nation</div><div class="a" style="left:219px;top:230px;font-size:10.7px;color:#333;white-space:nowrap;line-height:1;">Gold</div><div class="a" style="left:274px;top:230px;font-size:10.7px;color:#333;white-space:nowrap;line-height:1;">Silver</div><div class="a" style="left:330px;top:230px;font-size:10.7px;color:#333;white-space:nowrap;line-height:1;">Bronze</div><div class="a" style="left:385px;top:230px;font-size:10.7px;color:#333;white-space:nowrap;line-height:1;">Total</div><div class="a" style="left:451px;top:230px;font-size:10.7px;color:#333;white-space:nowrap;line-height:1;">1924-2012</div><div class="a" style="left:534px;top:230px;font-size:10.7px;color:#333;white-space:nowrap;line-height:1;">Per Participant</div><div class="a" style="left:106px;top:242.3px;font-size:10.4px;color:#333;white-space:nowrap;line-height:1;">United States</div><div class="a" style="right:1650px;top:242px;font-size:10.7px;color:#333;white-space:nowrap;line-height:1;text-align:right;">46</div><div class="a" style="right:1595px;top:242px;font-size:10.7px;color:#333;white-space:nowrap;line-height:1;text-align:right;">29</div><div class="a" style="right:1539px;top:242px;font-size:10.7px;color:#333;white-space:nowrap;line-height:1;text-align:right;">29</div><div class="a" style="left:383px;top:242px;width:68px;height:13px;border:1px solid #333399;background:#fff"></div><div class="a" style="right:1472px;top:242px;font-size:10.7px;color:#222;white-space:nowrap;line-height:1;text-align:right;font-weight:bold;letter-spacing:0.7px">104</div><div class="a" style="right:1298px;top:242px;font-size:10.7px;color:#333;white-space:nowrap;line-height:1;text-align:right;">0.59</div><div class="a" style="left:106px;top:255.3px;font-size:10.4px;color:#333;white-space:nowrap;line-height:1;">China (CHN)</div><div class="a" style="right:1650px;top:255px;font-size:10.7px;color:#333;white-space:nowrap;line-height:1;text-align:right;">38</div><div class="a" style="right:1595px;top:255px;font-size:10.7px;color:#333;white-space:nowrap;line-height:1;text-align:right;">27</div><div class="a" style="right:1539px;top:255px;font-size:10.7px;color:#333;white-space:nowrap;line-height:1;text-align:right;">23</div><div class="a" style="left:383px;top:254px;width:68px;height:13px;border:1px solid #333399;background:#fff"></div><div class="a" style="right:1472px;top:255px;font-size:10.7px;color:#222;white-space:nowrap;line-height:1;text-align:right;font-weight:bold;letter-spacing:0.7px">88</div><div class="a" style="right:1298px;top:255px;font-size:10.7px;color:#333;white-space:nowrap;line-height:1;text-align:right;">1.10</div><div class="a" style="left:106px;top:267.3px;font-size:10.4px;color:#333;white-space:nowrap;line-height:1;">Russia (RUS)</div><div class="a" style="right:1650px;top:267px;font-size:10.7px;color:#333;white-space:nowrap;line-height:1;text-align:right;">24</div><div class="a" style="right:1595px;top:267px;font-size:10.7px;color:#333;white-space:nowrap;line-height:1;text-align:right;">26</div><div class="a" style="right:1539px;top:267px;font-size:10.7px;color:#333;white-space:nowrap;line-height:1;text-align:right;">32</div><div class="a" style="left:383px;top:266px;width:68px;height:13px;border:1px solid #333399;background:#ccccff"></div><div class="a" style="right:1472px;top:267px;font-size:10.7px;color:#222;white-space:nowrap;line-height:1;text-align:right;font-weight:bold;letter-spacing:0.7px">82</div><div class="a" style="right:1298px;top:267px;font-size:10.7px;color:#333;white-space:nowrap;line-height:1;text-align:right;">2.41</div><div class="a" style="left:106px;top:279.3px;font-size:10.4px;color:#333;white-space:nowrap;line-height:1;">Great Britain (GBR)</div><div class="a" style="right:1650px;top:279px;font-size:10.7px;color:#333;white-space:nowrap;line-height:1;text-align:right;">29</div><div class="a" style="right:1595px;top:279px;font-size:10.7px;color:#333;white-space:nowrap;line-height:1;text-align:right;">17</div><div class="a" style="right:1539px;top:279px;font-size:10.7px;color:#333;white-space:nowrap;line-height:1;text-align:right;">19</div><div class="a" style="left:383px;top:278px;width:68px;height:13px;border:1px solid #333399;background:#ccccff"></div><div class="a" style="right:1472px;top:279px;font-size:10.7px;color:#222;white-space:nowrap;line-height:1;text-align:right;font-weight:bold;letter-spacing:0.7px">65</div><div class="a" style="right:1298px;top:279px;font-size:10.7px;color:#333;white-space:nowrap;line-height:1;text-align:right;">0.71</div><div class="a" style="left:106px;top:291.3px;font-size:10.4px;color:#333;white-space:nowrap;line-height:1;">Germany (GER)</div><div class="a" style="right:1650px;top:291px;font-size:10.7px;color:#333;white-space:nowrap;line-height:1;text-align:right;">11</div><div class="a" style="right:1595px;top:291px;font-size:10.7px;color:#333;white-space:nowrap;line-height:1;text-align:right;">19</div><div class="a" style="right:1539px;top:291px;font-size:10.7px;color:#333;white-space:nowrap;line-height:1;text-align:right;">14</div><div class="a" style="left:383px;top:290px;width:68px;height:14px;border:1px solid #333399;background:#fff"></div><div class="a" style="right:1472px;top:291px;font-size:10.7px;color:#222;white-space:nowrap;line-height:1;text-align:right;font-weight:bold;letter-spacing:0.7px">44</div><div class="a" style="right:1298px;top:291px;font-size:10.7px;color:#333;white-space:nowrap;line-height:1;text-align:right;">0.94</div><div class="a" style="left:106px;top:303.3px;font-size:10.4px;color:#333;white-space:nowrap;line-height:1;">Japan (JPN)</div><div class="a" style="right:1650px;top:303px;font-size:10.7px;color:#333;white-space:nowrap;line-height:1;text-align:right;">7</div><div class="a" style="right:1595px;top:303px;font-size:10.7px;color:#333;white-space:nowrap;line-height:1;text-align:right;">14</div><div class="a" style="right:1539px;top:303px;font-size:10.7px;color:#333;white-space:nowrap;line-height:1;text-align:right;">17</div><div class="a" style="left:383px;top:303px;width:68px;height:13px;border:1px solid #333399;background:#fff"></div><div class="a" style="right:1472px;top:303px;font-size:10.7px;color:#222;white-space:nowrap;line-height:1;text-align:right;font-weight:bold;letter-spacing:0.7px">38</div><div class="a" style="right:1298px;top:303px;font-size:10.7px;color:#333;white-space:nowrap;line-height:1;text-align:right;">1.27</div><div class="a" style="left:106px;top:316.3px;font-size:10.4px;color:#333;white-space:nowrap;line-height:1;">Australia (AUS)</div><div class="a" style="right:1650px;top:316px;font-size:10.7px;color:#333;white-space:nowrap;line-height:1;text-align:right;">7</div><div class="a" style="right:1595px;top:316px;font-size:10.7px;color:#333;white-space:nowrap;line-height:1;text-align:right;">16</div><div class="a" style="right:1539px;top:316px;font-size:10.7px;color:#333;white-space:nowrap;line-height:1;text-align:right;">12</div><div class="a" style="left:383px;top:315px;width:68px;height:13px;border:1px solid #333399;background:#ccccff"></div><div class="a" style="right:1472px;top:316px;font-size:10.7px;color:#222;white-space:nowrap;line-height:1;text-align:right;font-weight:bold;letter-spacing:0.7px">35</div><div class="a" style="right:1298px;top:316px;font-size:10.7px;color:#333;white-space:nowrap;line-height:1;text-align:right;">0.88</div><div class="a" style="left:106px;top:328.3px;font-size:10.4px;color:#333;white-space:nowrap;line-height:1;">France (FRA)</div><div class="a" style="right:1650px;top:328px;font-size:10.7px;color:#333;white-space:nowrap;line-height:1;text-align:right;">11</div><div class="a" style="right:1595px;top:328px;font-size:10.7px;color:#333;white-space:nowrap;line-height:1;text-align:right;">11</div><div class="a" style="right:1539px;top:328px;font-size:10.7px;color:#333;white-space:nowrap;line-height:1;text-align:right;">12</div><div class="a" style="left:383px;top:327px;width:68px;height:13px;border:1px solid #333399;background:#ccccff"></div><div class="a" style="right:1472px;top:328px;font-size:10.7px;color:#222;white-space:nowrap;line-height:1;text-align:right;font-weight:bold;letter-spacing:0.7px">34</div><div class="a" style="right:1298px;top:328px;font-size:10.7px;color:#333;white-space:nowrap;line-height:1;text-align:right;">0.31</div><div class="a" style="left:106px;top:340.3px;font-size:10.4px;color:#333;white-space:nowrap;line-height:1;">Italy (ITA)</div><div class="a" style="right:1650px;top:340px;font-size:10.7px;color:#333;white-space:nowrap;line-height:1;text-align:right;">8</div><div class="a" style="right:1595px;top:340px;font-size:10.7px;color:#333;white-space:nowrap;line-height:1;text-align:right;">9</div><div class="a" style="right:1539px;top:340px;font-size:10.7px;color:#333;white-space:nowrap;line-height:1;text-align:right;">11</div><div class="a" style="left:383px;top:339px;width:68px;height:14px;border:1px solid #333399;background:#fff"></div><div class="a" style="right:1472px;top:340px;font-size:10.7px;color:#222;white-space:nowrap;line-height:1;text-align:right;font-weight:bold;letter-spacing:0.7px">28</div><div class="a" style="right:1298px;top:340px;font-size:10.7px;color:#333;white-space:nowrap;line-height:1;text-align:right;">0.26</div><div class="a" style="left:106px;top:352.3px;font-size:10.4px;color:#333;white-space:nowrap;line-height:1;">South Korea (KOR)</div><div class="a" style="right:1650px;top:352px;font-size:10.7px;color:#333;white-space:nowrap;line-height:1;text-align:right;">13</div><div class="a" style="right:1595px;top:352px;font-size:10.7px;color:#333;white-space:nowrap;line-height:1;text-align:right;">8</div><div class="a" style="right:1539px;top:352px;font-size:10.7px;color:#333;white-space:nowrap;line-height:1;text-align:right;">7</div><div class="a" style="left:383px;top:352px;width:68px;height:13px;border:1px solid #333399;background:#fff"></div><div class="a" style="right:1472px;top:352px;font-size:10.7px;color:#222;white-space:nowrap;line-height:1;text-align:right;font-weight:bold;letter-spacing:0.7px">28</div><div class="a" style="right:1298px;top:352px;font-size:10.7px;color:#333;white-space:nowrap;line-height:1;text-align:right;">0.28</div><div class="a" style="left:106px;top:364.3px;font-size:10.4px;color:#333;white-space:nowrap;line-height:1;">Netherlands (NED)</div><div class="a" style="right:1650px;top:364px;font-size:10.7px;color:#333;white-space:nowrap;line-height:1;text-align:right;">6</div><div class="a" style="right:1595px;top:364px;font-size:10.7px;color:#333;white-space:nowrap;line-height:1;text-align:right;">6</div><div class="a" style="right:1539px;top:364px;font-size:10.7px;color:#333;white-space:nowrap;line-height:1;text-align:right;">8</div><div class="a" style="left:383px;top:364px;width:68px;height:13px;border:1px solid #333399;background:#fff"></div><div class="a" style="right:1472px;top:364px;font-size:10.7px;color:#222;white-space:nowrap;line-height:1;text-align:right;font-weight:bold;letter-spacing:0.7px">20</div><div class="a" style="right:1298px;top:364px;font-size:10.7px;color:#333;white-space:nowrap;line-height:1;text-align:right;">0.18</div><div class="a" style="left:106px;top:377.3px;font-size:10.4px;color:#333;white-space:nowrap;line-height:1;">Ukraine (UKR)</div><div class="a" style="right:1650px;top:377px;font-size:10.7px;color:#333;white-space:nowrap;line-height:1;text-align:right;">6</div><div class="a" style="right:1595px;top:377px;font-size:10.7px;color:#333;white-space:nowrap;line-height:1;text-align:right;">5</div><div class="a" style="right:1539px;top:377px;font-size:10.7px;color:#333;white-space:nowrap;line-height:1;text-align:right;">9</div><div class="a" style="left:383px;top:376px;width:68px;height:13px;border:1px solid #333399;background:#ccccff"></div><div class="a" style="right:1472px;top:377px;font-size:10.7px;color:#222;white-space:nowrap;line-height:1;text-align:right;font-weight:bold;letter-spacing:0.7px">20</div><div class="a" style="right:1298px;top:377px;font-size:10.7px;color:#333;white-space:nowrap;line-height:1;text-align:right;">0.43</div><div class="a" style="left:106px;top:389.3px;font-size:10.4px;color:#333;white-space:nowrap;line-height:1;">Hungary (HUN)</div><div class="a" style="right:1650px;top:389px;font-size:10.7px;color:#333;white-space:nowrap;line-height:1;text-align:right;">8</div><div class="a" style="right:1595px;top:389px;font-size:10.7px;color:#333;white-space:nowrap;line-height:1;text-align:right;">4</div><div class="a" style="right:1539px;top:389px;font-size:10.7px;color:#333;white-space:nowrap;line-height:1;text-align:right;">6</div><div class="a" style="left:383px;top:388px;width:68px;height:13px;border:1px solid #333399;background:#fff"></div><div class="a" style="right:1472px;top:389px;font-size:10.7px;color:#222;white-space:nowrap;line-height:1;text-align:right;font-weight:bold;letter-spacing:0.7px">18</div><div class="a" style="right:1298px;top:389px;font-size:10.7px;color:#333;white-space:nowrap;line-height:1;text-align:right;">0.47</div><div class="a" style="left:106px;top:401.3px;font-size:10.4px;color:#333;white-space:nowrap;line-height:1;">Cuba (CUB)</div><div class="a" style="right:1650px;top:401px;font-size:10.7px;color:#333;white-space:nowrap;line-height:1;text-align:right;">5</div><div class="a" style="right:1595px;top:401px;font-size:10.7px;color:#333;white-space:nowrap;line-height:1;text-align:right;">3</div><div class="a" style="right:1539px;top:401px;font-size:10.7px;color:#333;white-space:nowrap;line-height:1;text-align:right;">6</div><div class="a" style="left:383px;top:400px;width:68px;height:14px;border:1px solid #333399;background:#ccccff"></div><div class="a" style="right:1472px;top:401px;font-size:10.7px;color:#222;white-space:nowrap;line-height:1;text-align:right;font-weight:bold;letter-spacing:0.7px">14</div><div class="a" style="right:1298px;top:401px;font-size:10.7px;color:#333;white-space:nowrap;line-height:1;text-align:right;">0.74</div><div class="a" style="left:106px;top:413.3px;font-size:10.4px;color:#333;white-space:nowrap;line-height:1;">Kazakhstan (KAZ)</div><div class="a" style="right:1650px;top:413px;font-size:10.7px;color:#333;white-space:nowrap;line-height:1;text-align:right;">7</div><div class="a" style="right:1595px;top:413px;font-size:10.7px;color:#333;white-space:nowrap;line-height:1;text-align:right;">1</div><div class="a" style="right:1539px;top:413px;font-size:10.7px;color:#333;white-space:nowrap;line-height:1;text-align:right;">5</div><div class="a" style="left:383px;top:413px;width:68px;height:13px;border:1px solid #333399;background:#ccccff"></div><div class="a" style="right:1472px;top:413px;font-size:10.7px;color:#222;white-space:nowrap;line-height:1;text-align:right;font-weight:bold;letter-spacing:0.7px">13</div><div class="a" style="right:1298px;top:413px;font-size:10.7px;color:#333;white-space:nowrap;line-height:1;text-align:right;">0.14</div><div class="a" style="left:106px;top:426.3px;font-size:10.4px;color:#333;white-space:nowrap;line-height:1;">New Zealand (NZL)</div><div class="a" style="right:1650px;top:426px;font-size:10.7px;color:#333;white-space:nowrap;line-height:1;text-align:right;">6</div><div class="a" style="right:1595px;top:426px;font-size:10.7px;color:#333;white-space:nowrap;line-height:1;text-align:right;">2</div><div class="a" style="right:1539px;top:426px;font-size:10.7px;color:#333;white-space:nowrap;line-height:1;text-align:right;">5</div><div class="a" style="left:383px;top:425px;width:68px;height:13px;border:1px solid #333399;background:#ccccff"></div><div class="a" style="right:1472px;top:426px;font-size:10.7px;color:#222;white-space:nowrap;line-height:1;text-align:right;font-weight:bold;letter-spacing:0.7px">13</div><div class="a" style="right:1298px;top:426px;font-size:10.7px;color:#333;white-space:nowrap;line-height:1;text-align:right;">0.25</div><div class="a" style="left:106px;top:438.3px;font-size:10.4px;color:#333;white-space:nowrap;line-height:1;">Iran (IRI)</div><div class="a" style="right:1650px;top:438px;font-size:10.7px;color:#333;white-space:nowrap;line-height:1;text-align:right;">4</div><div class="a" style="right:1595px;top:438px;font-size:10.7px;color:#333;white-space:nowrap;line-height:1;text-align:right;">5</div><div class="a" style="right:1539px;top:438px;font-size:10.7px;color:#333;white-space:nowrap;line-height:1;text-align:right;">3</div><div class="a" style="left:383px;top:437px;width:68px;height:13px;border:1px solid #333399;background:#ccccff"></div><div class="a" style="right:1472px;top:438px;font-size:10.7px;color:#222;white-space:nowrap;line-height:1;text-align:right;font-weight:bold;letter-spacing:0.7px">12</div><div class="a" style="right:1298px;top:438px;font-size:10.7px;color:#333;white-space:nowrap;line-height:1;text-align:right;">0.13</div><div class="a" style="left:106px;top:450.3px;font-size:10.4px;color:#333;white-space:nowrap;line-height:1;">Jamaica (JAM)</div><div class="a" style="right:1650px;top:450px;font-size:10.7px;color:#333;white-space:nowrap;line-height:1;text-align:right;">4</div><div class="a" style="right:1595px;top:450px;font-size:10.7px;color:#333;white-space:nowrap;line-height:1;text-align:right;">4</div><div class="a" style="right:1539px;top:450px;font-size:10.7px;color:#333;white-space:nowrap;line-height:1;text-align:right;">4</div><div class="a" style="left:383px;top:449px;width:68px;height:14px;border:1px solid #333399;background:#fff"></div><div class="a" style="right:1472px;top:450px;font-size:10.7px;color:#222;white-space:nowrap;line-height:1;text-align:right;font-weight:bold;letter-spacing:0.7px">12</div><div class="a" style="right:1298px;top:450px;font-size:10.7px;color:#333;white-space:nowrap;line-height:1;text-align:right;">0.08</div><div class="a" style="left:106px;top:462.3px;font-size:10.4px;color:#333;white-space:nowrap;line-height:1;">Czech Republic (CZE)</div><div class="a" style="right:1650px;top:462px;font-size:10.7px;color:#333;white-space:nowrap;line-height:1;text-align:right;">4</div><div class="a" style="right:1595px;top:462px;font-size:10.7px;color:#333;white-space:nowrap;line-height:1;text-align:right;">3</div><div class="a" style="right:1539px;top:462px;font-size:10.7px;color:#333;white-space:nowrap;line-height:1;text-align:right;">3</div><div class="a" style="left:383px;top:462px;width:68px;height:13px;border:1px solid #333399;background:#fff"></div><div class="a" style="right:1472px;top:462px;font-size:10.7px;color:#222;white-space:nowrap;line-height:1;text-align:right;font-weight:bold;letter-spacing:0.7px">10</div><div class="a" style="right:1298px;top:462px;font-size:10.7px;color:#333;white-space:nowrap;line-height:1;text-align:right;">0.05</div><div class="a" style="left:106px;top:474.3px;font-size:10.4px;color:#333;white-space:nowrap;line-height:1;">North Korea (PRK)</div><div class="a" style="right:1650px;top:474px;font-size:10.7px;color:#333;white-space:nowrap;line-height:1;text-align:right;">4</div><div class="a" style="right:1595px;top:474px;font-size:10.7px;color:#333;white-space:nowrap;line-height:1;text-align:right;">0</div><div class="a" style="right:1539px;top:474px;font-size:10.7px;color:#333;white-space:nowrap;line-height:1;text-align:right;">2</div><div class="a" style="left:383px;top:474px;width:68px;height:13px;border:1px solid #333399;background:#fff"></div><div class="a" style="right:1472px;top:474px;font-size:10.7px;color:#222;white-space:nowrap;line-height:1;text-align:right;font-weight:bold;letter-spacing:0.7px">6</div><div class="a" style="right:1298px;top:474px;font-size:10.7px;color:#333;white-space:nowrap;line-height:1;text-align:right;">0.10</div><div class="a" style="left:65px;top:498px;width:1064px;height:12px;background:linear-gradient(rgba(0,0,0,0),rgba(0,0,0,.10));"></div><div class="a" style="left:65px;top:538px;width:1121px;height:519px;background:#f2f1f0;"></div><div class="tb" style="left:65px;top:510px;width:1121px;height:28px;border-radius:5px 5px 0 0"></div><div class="cb" style="left:72.5px;top:516.5px;background:#56554f"><svg width="16" height="16"><path d="M5.2 5.2L10.8 10.8M10.8 5.2L5.2 10.8" stroke="#3a3935" stroke-width="1.1"/></svg></div><div class="cb" style="left:91.5px;top:516.5px;background:#56554f"><svg width="16" height="16"><path d="M4.5 8H11.5" stroke="#3a3935" stroke-width="1.3"/></svg></div><div class="cb" style="left:110.5px;top:516.5px;background:#56554f"><svg width="16" height="16"><rect x="5" y="5" width="6" height="6" fill="none" stroke="#3a3935" stroke-width="1.2"/></svg></div><div class="tt" style="left:138px;top:516px">Demo-2012SummerOlympics2013 (copy).xls : 2 - LibreOfficeDev Calc</div><div class="a" style="left:65px;top:576px;width:1121px;height:1px;background:#dad8d4;"></div><div class="a" style="left:68px;top:553px;width:5px;height:9px;background:repeating-linear-gradient(#c9c7c3 0 1px,transparent 1px 3px)"></div><svg class="a" style="left:86px;top:546px" width="18" height="22" viewBox="0 0 18 22"><path d="M1 1h11l5 5v15H1z" fill="#f4fbf2" stroke="#3aa33a"/><rect x="4" y="9" width="10" height="8" fill="#37a437"/><path d="M4 11.5h10M4 14h10M7.5 9v8M11 9v8" stroke="#fff" stroke-width=".8"/></svg><svg class="a" style="left:115px;top:554px" width="9" height="6" viewBox="0 0 9 6"><path d="M1 1h7l-3.5 4z" fill="#222"/></svg><svg class="a" style="left:132px;top:546px" width="24" height="22" viewBox="0 0 24 22"><path d="M2 5h7l2 2h9v3H2z" fill="#d0cfcc"/><rect x="5" y="2" width="12" height="10" fill="#f2f2f2" stroke="#c6c5c2"/><path d="M1 10h22l-2 10H3z" fill="#dddcd9" stroke="#c6c5c2"/><rect x="7" y="13" width="10" height="4" fill="#eeedeb" stroke="#c6c5c2" stroke-width=".8"/></svg><svg class="a" style="left:165px;top:554px" width="9" height="6" viewBox="0 0 9 6"><path d="M1 1h7l-3.5 4z" fill="#b5b4b1"/></svg><svg class="a" style="left:183px;top:546px" width="24" height="22" viewBox="0 0 24 22"><rect x="2" y="2" width="20" height="19" rx="2" fill="#dddcd9" stroke="#c6c5c2"/><rect x="5" y="3" width="14" height="7" fill="#f4f4f2"/><path d="M7 5h10M7 7.5h10" stroke="#c6c5c2" stroke-width=".8"/><rect x="7" y="13" width="10" height="7" fill="#cfcecb"/><rect x="9" y="14" width="3" height="5" fill="#eee"/></svg><svg class="a" style="left:217px;top:546px" width="24" height="22" viewBox="0 0 24 22"><rect x="1" y="5" width="22" height="14" fill="#f4f4f2" stroke="#c6c5c2"/><path d="M1 5l11 8 11-8" fill="none" stroke="#c6c5c2"/></svg><div class="sep" style="left:249px;top:547px;height:20px"></div><div class="a" style="left:254px;top:541px;width:31px;height:32px;border:1px solid #bdbbb7;border-radius:4px;background:#f6f5f4"></div><svg class="a" style="left:260px;top:546px" width="20" height="22" viewBox="0 0 20 22"><rect x="1" y="1" width="16" height="20" fill="#fff" stroke="#555"/><path d="M4 5h10M4 8h10M4 11h8M4 14h6" stroke="#888" stroke-width=".8"/><path d="M8 19l10-10 2 2-10 10-3 1z" fill="#333"/><path d="M17 8l2-2 2 2-2 2z" fill="#d6a"/></svg><div class="sep" style="left:290px;top:547px;height:20px"></div><svg class="a" style="left:300px;top:546px" width="20" height="22" viewBox="0 0 20 22"><rect x="1" y="1" width="17" height="19" fill="#f4f4f4" stroke="#666"/><path d="M3 3c3 0 6 1 8 1M3 3c2 2 5 6 7 10" stroke="#e02020" stroke-width="1.6" fill="none"/><text x="3" y="18.5" font-size="6.2" font-weight="bold" fill="#111" font-family="Liberation Sans" letter-spacing=".3">PDF</text></svg><svg class="a" style="left:332px;top:546px" width="23" height="22" viewBox="0 0 23 22"><rect x="6" y="1" width="11" height="8" fill="#fafafa" stroke="#888"/><path d="M11.5 2v4M9.5 4.5l2 2 2-2" stroke="#999" fill="none"/><rect x="1" y="8" width="21" height="10" rx="2.5" fill="#e0e0e0" stroke="#777"/><rect x="3" y="10" width="17" height="4" fill="#2e2e2e"/><rect x="4" y="17" width="15" height="4" fill="#fff" stroke="#555"/></svg><div class="a" style="left:361px;top:541px;width:31px;height:32px;border:1px solid #bdbbb7;border-radius:4px;background:#f6f5f4"></div><svg class="a" style="left:366px;top:546px" width="23" height="22" viewBox="0 0 23 22"><rect x="7" y="1" width="12" height="8" fill="#fafafa" stroke="#888"/><rect x="1" y="8" width="21" height="10" rx="2.5" fill="#e0e0e0" stroke="#777"/><rect x="3" y="10" width="17" height="4" fill="#2e2e2e"/><rect x="4" y="17" width="15" height="4" fill="#fff" stroke="#555"/><circle cx="6" cy="6" r="4.5" fill="#ccc" stroke="#333" stroke-width="1.4"/><path d="M9 9l8 6" stroke="#222" stroke-width="2"/></svg><div class="sep" style="left:397px;top:547px;height:20px"></div><svg class="a" style="left:405px;top:546px" width="24" height="22" viewBox="0 0 24 22"><text x="1" y="10" font-size="9" font-weight="bold" fill="#bdbcb9" font-family="Liberation Sans">ABC</text><path d="M10 16l4 4 7-7" stroke="#c9c8c5" stroke-width="3" fill="none"/></svg><svg class="a" style="left:438px;top:546px" width="24" height="22" viewBox="0 0 24 22"><text x="1" y="10" font-size="9" font-weight="bold" fill="#bdbcb9" font-family="Liberation Sans">ABC</text><path d="M1 12h18" stroke="#c9c8c5" stroke-dasharray="1 1"/><path d="M10 16l4 4 7-7" stroke="#c9c8c5" stroke-width="3" fill="none"/></svg><div class="sep" style="left:470px;top:547px;height:20px"></div><svg class="a" style="left:482px;top:546px" width="18" height="22" viewBox="0 0 18 22"><circle cx="4" cy="18" r="3" fill="none" stroke="#c6c5c2" stroke-width="1.5"/><circle cx="14" cy="18" r="3" fill="none" stroke="#c6c5c2" stroke-width="1.5"/><path d="M5 16L13 1M13 16L5 1" stroke="#c6c5c2" stroke-width="1.5"/></svg><svg class="a" style="left:513px;top:546px" width="22" height="22" viewBox="0 0 22 22"><rect x="1" y="1" width="13" height="15" fill="#f3f2f0" stroke="#c6c5c2"/><rect x="7" y="6" width="13" height="15" fill="#f3f2f0" stroke="#c6c5c2"/></svg><svg class="a" style="left:545px;top:546px" width="22" height="22" viewBox="0 0 22 22"><rect x="1" y="3" width="16" height="18" fill="#d9d8d6" stroke="#c6c5c2"/><rect x="7" y="8" width="13" height="13" fill="#f3f2f0" stroke="#c6c5c2"/></svg><svg class="a" style="left:577px;top:554px" width="9" height="6" viewBox="0 0 9 6"><path d="M1 1h7l-3.5 4z" fill="#b5b4b1"/></svg><svg class="a" style="left:596px;top:546px" width="22" height="22" viewBox="0 0 22 22"><path d="M12 2h4v8h-4z" fill="#d9d8d6"/><path d="M9 10h10v4c-2 4-4 7-10 7-4 0-7 0-8 0 4-2 8-5 8-11z" fill="#d9d8d6"/></svg><div class="sep" style="left:627px;top:547px;height:20px"></div><svg class="a" style="left:635px;top:546px" width="24" height="22" viewBox="0 0 24 22"><path d="M22 16C20 8 14 6 9 8V3L1 10l8 7v-5c5-1 9 0 13 4z" fill="#d9d8d6"/></svg><svg class="a" style="left:670px;top:554px" width="9" height="6" viewBox="0 0 9 6"><path d="M1 1h7l-3.5 4z" fill="#b5b4b1"/></svg><svg class="a" style="left:686px;top:546px" width="24" height="22" viewBox="0 0 24 22"><path d="M2 16C4 8 10 6 15 8V3l8 7-8 7v-5c-5-1-9 0-13 4z" fill="#d9d8d6"/></svg><svg class="a" style="left:720px;top:554px" width="9" height="6" viewBox="0 0 9 6"><path d="M1 1h7l-3.5 4z" fill="#b5b4b1"/></svg><div class="sep" style="left:735px;top:547px;height:20px"></div><svg class="a" style="left:746px;top:551px" width="20" height="12" viewBox="0 0 20 12"><rect x="1" y="2" width="18" height="6" rx="3" fill="none" stroke="#c6c5c2" stroke-width="1.6"/><path d="M4 8v3M16 8v3" stroke="#c6c5c2" stroke-width="1.6"/></svg><svg class="a" style="left:781px;top:546px" width="20" height="22" viewBox="0 0 20 22"><path d="M3 1v20" stroke="#c6c5c2" stroke-width="2" stroke-dasharray="2 2.5"/><path d="M12 3v15M7 13l5 5 5-5" stroke="#c6c5c2" stroke-width="1.5" fill="none"/></svg><svg class="a" style="left:811px;top:546px" width="20" height="22" viewBox="0 0 20 22"><path d="M3 1v20" stroke="#c6c5c2" stroke-width="2" stroke-dasharray="2 2.5"/><path d="M12 19V4M7 9l5-5 5 5" stroke="#c6c5c2" stroke-width="1.5" fill="none"/></svg><div class="sep" style="left:842px;top:547px;height:20px"></div><svg class="a" style="left:851px;top:545px" width="24" height="24" viewBox="0 0 24 24"><ellipse cx="10" cy="15" rx="9" ry="7" fill="#d9d8d6"/><circle cx="16" cy="4" r="3" fill="none" stroke="#c6c5c2"/><circle cx="21" cy="6" r="2.5" fill="none" stroke="#c6c5c2"/></svg><svg class="a" style="left:885px;top:546px" width="22" height="22" viewBox="0 0 22 22"><rect x="1" y="1" width="20" height="20" rx="3" fill="#e4e3e1" stroke="#c6c5c2" stroke-width="1.5"/><rect x="5" y="5" width="5" height="5" fill="none" stroke="#c6c5c2"/><rect x="12" y="5" width="5" height="5" fill="none" stroke="#c6c5c2"/><rect x="5" y="12" width="5" height="5" fill="none" stroke="#c6c5c2"/><path d="M12 17l5-5v5z" fill="#c6c5c2"/></svg><div class="sep" style="left:917px;top:547px;height:20px"></div><svg class="a" style="left:925px;top:546px" width="22" height="22" viewBox="0 0 22 22"><circle cx="11" cy="11" r="9.5" fill="none" stroke="#c6c5c2" stroke-width="1.8"/><path d="M15 7l-6 3-2 5 6-3z" fill="none" stroke="#c6c5c2" stroke-width="1.2"/></svg><svg class="a" style="left:958px;top:547px" width="24" height="20" viewBox="0 0 24 20"><rect x="1" y="2" width="22" height="16" rx="2" fill="#e4e3e1" stroke="#c6c5c2" stroke-width="1.5"/><path d="M8 14l4-6 4 6M12 8v8" stroke="#c6c5c2" fill="none"/></svg><svg class="a" style="left:991px;top:546px" width="22" height="22" viewBox="0 0 22 22"><path d="M3 1h11l5 5v15H3z" fill="#efeeec" stroke="#d9d8d6"/><circle cx="9" cy="14" r="5" fill="#d9d8d6"/><circle cx="14" cy="14" r="5" fill="#c6c5c2"/></svg><div class="sep" style="left:1023px;top:547px;height:20px"></div><svg class="a" style="left:1032px;top:545px" width="24" height="24"><circle cx="12" cy="12" r="10" fill="none" stroke="#e33" stroke-width="5"/><circle cx="12" cy="12" r="10" fill="none" stroke="#fff" stroke-width="5" stroke-dasharray="7.85 7.85" stroke-dashoffset="3.9"/><circle cx="12" cy="12" r="12" fill="none" stroke="#f0a050" stroke-width="0.8"/></svg><div class="a" style="left:68px;top:592px;width:5px;height:9px;background:repeating-linear-gradient(#c9c7c3 0 1px,transparent 1px 3px)"></div><svg class="a" style="left:84px;top:586px" width="22" height="20" viewBox="0 0 22 20"><path d="M9 2L2 10l7 8M13 10h6" stroke="#d9d8d6" stroke-width="2" fill="none"/></svg><svg class="a" style="left:117px;top:586px" width="22" height="20" viewBox="0 0 22 20"><path d="M13 2l7 8-7 8M3 10h6" stroke="#d9d8d6" stroke-width="2" fill="none"/></svg><div class="sep" style="left:149px;top:586px;height:20px"></div><svg class="a" style="left:159px;top:586px" width="22" height="20" viewBox="0 0 22 20"><path d="M3 2v16M14 2L6 10l8 8" stroke="#d9d8d6" stroke-width="2" fill="none"/></svg><svg class="a" style="left:192px;top:586px" width="22" height="20" viewBox="0 0 22 20"><path d="M19 2v16M8 2l8 8-8 8" stroke="#d9d8d6" stroke-width="2" fill="none"/></svg><div class="sep" style="left:222px;top:586px;height:20px"></div><svg class="a" style="left:233px;top:587px" width="19" height="19" viewBox="0 0 19 19"><rect x="1" y="1" width="17" height="17" rx="3" fill="#fafafa" stroke="#777"/><path d="M9.5 5v9M5 9.5h9" stroke="#666" stroke-width="1.6"/></svg><svg class="a" style="left:266px;top:587px" width="19" height="19" viewBox="0 0 19 19"><rect x="1" y="1" width="17" height="17" rx="3" fill="#fafafa" stroke="#777"/><path d="M5 9.5h9" stroke="#666" stroke-width="1.6"/></svg><svg class="a" style="left:297px;top:585px" width="24" height="22" viewBox="0 0 24 22"><rect x="5" y="6" width="14" height="10" fill="#f4f4f4" stroke="#777"/><path d="M12 1l3 3H9zM12 21l3-3H9zM1 11l3-3v6zM23 11l-3-3v6z" fill="#4a73b5"/></svg><div class="sep" style="left:330px;top:586px;height:20px"></div><div class="a" style="left:337px;top:590px;font-size:11.6px;color:#3c3c3c;white-space:nowrap;line-height:1;">Format Page</div><div class="sep" style="left:415px;top:586px;height:20px"></div><div class="a" style="left:423px;top:590px;font-size:11.6px;color:#3c3c3c;white-space:nowrap;line-height:1;">Margins</div><div class="sep" style="left:478px;top:586px;height:20px"></div><div class="a" style="left:487px;top:596px;width:7px;height:2px;background:#6a6a6a;"></div><div class="a" style="left:502px;top:596px;width:131px;height:1px;background:#9a9996;"></div><div class="a" style="left:562px;top:592px;width:9px;height:9px;border-radius:50%;background:#fff;border:1px solid #777"></div><div class="a" style="left:639px;top:596px;width:8px;height:2px;background:#6a6a6a;"></div><div class="a" style="left:642px;top:593px;width:2px;height:8px;background:#6a6a6a;"></div><div class="sep" style="left:657px;top:586px;height:20px"></div><div class="a" style="left:664px;top:590px;font-size:11.6px;color:#3c3c3c;white-space:nowrap;line-height:1;">Close Preview</div><div class="a" style="left:65px;top:616px;width:1107px;height:418px;background:#efeeec;"></div><div class="a" style="left:82px;top:616px;width:1074px;height:418px;background:#fff;"></div><div class="a" style="left:65px;top:615px;width:1107px;height:1px;background:#d8d6d2;"></div><div class="a" style="left:82px;top:616px;width:1074px;height:1px;background:#111;"></div><div class="a" style="left:82px;top:616px;width:1px;height:418px;background:#111;"></div><div class="a" style="left:1154px;top:616px;width:2px;height:418px;background:#111;"></div><div class="a" style="left:1172px;top:616px;width:14px;height:418px;background:#eceae7;"></div><div class="a" style="left:1172px;top:617px;width:13px;height:417px;border:1px solid #bab7b2;border-radius:6px;background:linear-gradient(90deg,#f4f4f3,#e9e8e6)"></div><svg class="a" style="left:1175px;top:622px" width="7" height="5"><path d="M0 4L3.5 0L7 4z" fill="#999"/></svg><svg class="a" style="left:1175px;top:1024px" width="7" height="5"><path d="M0 0L3.5 4L7 0z" fill="#999"/></svg><div class="a" style="left:1172px;top:629px;width:13px;height:200px;border:1px solid #b5b2ad;border-radius:6px;background:linear-gradient(90deg,#fbfbfb,#e4e3e1)"></div><div class="a" style="left:1175px;top:725px;width:7px;height:5px;background:repeating-linear-gradient(#aaa 0 1px,transparent 1px 2px)"></div><div class="a" style="left:106px;top:663px;width:11px;height:371px;background:#0066cc;"></div><div class="a" style="left:117px;top:663px;width:516px;height:7px;background:#99ccff;"></div><div class="a" style="left:633px;top:663px;width:496px;height:7px;background:#0066cc;"></div><div class="a" style="left:117px;top:670px;width:939px;height:52px;background:#fff;"></div><div class="a" style="left:117px;top:722px;width:516px;height:7px;background:#99ccff;"></div><div class="a" style="left:633px;top:722px;width:423px;height:7px;background:#0066cc;"></div><div class="a" style="left:1056px;top:670px;width:73px;height:89px;background:#0066cc;"></div><div class="a" style="left:1056px;top:759px;width:73px;height:275px;background:#99ccff;"></div><div class="a" style="left:117px;top:729px;width:516px;height:305px;background:#fff;"></div><div class="a" style="left:633px;top:729px;width:9px;height:305px;background:#0066cc;"></div><div class="a" style="left:642px;top:729px;width:414px;height:92px;background:#99ccff;"></div><div class="a" style="left:642px;top:821px;width:414px;height:15px;background:#0066cc;"></div><div class="a" style="left:642px;top:836px;width:5px;height:15px;background:#0066cc;"></div><div class="a" style="left:647px;top:836px;width:409px;height:15px;background:#ffffcc;"></div><div class="a" style="left:642px;top:851px;width:414px;height:183px;background:#99ccff;"></div><div class="a" style="left:119px;top:675px;width:111px;height:47px;border:1px solid #b5b5b5;background:#fff"></div><svg class="a" style="left:124px;top:681px" width="27" height="27" viewBox="0 0 27 27"><rect x="0.5" y="0.5" width="26" height="26" fill="#e8e8e8" stroke="#555"/><rect x="0" y="24" width="27" height="3" fill="#333"/><rect x="10" y="5" width="8" height="13" fill="#567aa6" stroke="#2e4a70"/><rect x="13" y="11" width="10" height="8" fill="#f6c82e" stroke="#b07a10"/><rect x="4" y="15" width="10" height="7" fill="#e24a1a" stroke="#8a1a0a"/></svg><div class="a" style="left:158px;top:681.5px;font-family:'Liberation Serif',serif;font-size:12.6px;color:#111;white-space:nowrap;line-height:1">Picture 42 ...</div><div class="a" style="left:259px;top:687px;font-size:19.6px;color:#111;white-space:nowrap;line-height:1;">2012 Olympics Medal Standings</div><div class="a" style="left:750px;top:672px;width:203px;height:51px;border:1px solid #b5b5b5;background:#fff"></div><svg class="a" style="left:755px;top:678px" width="27" height="27" viewBox="0 0 27 27"><rect x="0.5" y="0.5" width="26" height="26" fill="#e8e8e8" stroke="#555"/><rect x="0" y="24" width="27" height="3" fill="#333"/><rect x="10" y="5" width="8" height="13" fill="#567aa6" stroke="#2e4a70"/><rect x="13" y="11" width="10" height="8" fill="#f6c82e" stroke="#b07a10"/><rect x="4" y="15" width="10" height="7" fill="#e24a1a" stroke="#8a1a0a"/></svg><div class="a" style="left:789px;top:678.5px;font-family:'Liberation Serif',serif;font-size:12.6px;color:#111;white-space:nowrap;line-height:1">Picture 34 ...</div><div class="a" style="left:1080px;top:670px;width:24px;height:268px;border:1px solid #9aa8bd"></div><div class="a" style="left:1080px;top:942px;width:24px;height:92px;border:1px solid #9aa8bd"></div><div class="a" style="left:1086px;top:677.0px;font-family:'Liberation Serif',serif;font-size:12px;color:#111;line-height:1">Pi</div><div class="a" style="left:1086px;top:690.7px;font-family:'Liberation Serif',serif;font-size:12px;color:#111;line-height:1">ct</div><div class="a" style="left:1086px;top:704.4px;font-family:'Liberation Serif',serif;font-size:12px;color:#111;line-height:1">ur</div><div class="a" style="left:1086px;top:718.1px;font-family:'Liberation Serif',serif;font-size:12px;color:#111;line-height:1">e</div><div class="a" style="left:1086px;top:731.8px;font-family:'Liberation Serif',serif;font-size:12px;color:#111;line-height:1">4</div><div class="a" style="left:1086px;top:745.5px;font-family:'Liberation Serif',serif;font-size:12px;color:#111;line-height:1">3</div><div class="a" style="left:1086px;top:759.2px;font-family:'Liberation Serif',serif;font-size:12px;color:#111;line-height:1">...</div><div class="a" style="left:1086px;top:948.0px;font-family:'Liberation Serif',serif;font-size:12px;color:#111;line-height:1">Pi</div><div class="a" style="left:1086px;top:961.7px;font-family:'Liberation Serif',serif;font-size:12px;color:#111;line-height:1">ct</div><div class="a" style="left:1086px;top:975.4px;font-family:'Liberation Serif',serif;font-size:12px;color:#111;line-height:1">ur</div><div class="a" style="left:1086px;top:989.1px;font-family:'Liberation Serif',serif;font-size:12px;color:#111;line-height:1">e</div><div class="a" style="left:1086px;top:1002.8px;font-family:'Liberation Serif',serif;font-size:12px;color:#111;line-height:1">4</div><div class="a" style="left:1086px;top:1016.5px;font-family:'Liberation Serif',serif;font-size:12px;color:#111;line-height:1">4</div><div class="a" style="left:648px;top:837px;width:16px;height:14px;border:1px solid #bbb;background:#ffffee"></div><div class="a" style="left:654px;top:843.5px;font-family:'Liberation Serif',serif;font-size:13px;color:#111;line-height:1">P</div><div class="a" style="left:654px;top:857.25px;font-family:'Liberation Serif',serif;font-size:13px;color:#111;line-height:1">i</div><div class="a" style="left:654px;top:871.0px;font-family:'Liberation Serif',serif;font-size:13px;color:#111;line-height:1">c</div><div class="a" style="left:654px;top:884.75px;font-family:'Liberation Serif',serif;font-size:13px;color:#111;line-height:1">t</div><div class="a" style="left:654px;top:898.5px;font-family:'Liberation Serif',serif;font-size:13px;color:#111;line-height:1">u</div><div class="a" style="left:654px;top:912.25px;font-family:'Liberation Serif',serif;font-size:13px;color:#111;line-height:1">r</div><div class="a" style="left:654px;top:926.0px;font-family:'Liberation Serif',serif;font-size:13px;color:#111;line-height:1">e</div><div class="a" style="left:654px;top:953.5px;font-family:'Liberation Serif',serif;font-size:13px;color:#111;line-height:1">4</div><div class="a" style="left:654px;top:967.25px;font-family:'Liberation Serif',serif;font-size:13px;color:#111;line-height:1">9</div><div class="a" style="left:654px;top:994.75px;font-family:'Liberation Serif',serif;font-size:13px;color:#111;line-height:1">.</div><div class="a" style="left:654px;top:1008.5px;font-family:'Liberation Serif',serif;font-size:13px;color:#111;line-height:1">.</div><div class="a" style="left:654px;top:1022.25px;font-family:'Liberation Serif',serif;font-size:13px;color:#111;line-height:1">.</div><div class="a" style="left:668px;top:839.5px;font-size:10.3px;color:#222;white-space:nowrap;line-height:1;">Use the slicers above to analyze the medal standings.</div><div class="a" style="left:120px;top:732.5px;font-size:10.4px;color:#333;white-space:nowrap;line-height:1;">Nation</div><div class="a" style="left:234px;top:732.5px;font-size:10.4px;color:#333;white-space:nowrap;line-height:1;">Gold</div><div class="a" style="left:289px;top:732.5px;font-size:10.4px;color:#333;white-space:nowrap;line-height:1;">Silver</div><div class="a" style="left:343px;top:732.5px;font-size:10.4px;color:#333;white-space:nowrap;line-height:1;">Bronze</div><div class="a" style="left:398px;top:732.5px;font-size:10.4px;color:#333;white-space:nowrap;line-height:1;">Total</div><div class="a" style="left:463px;top:732.5px;font-size:10.4px;color:#333;white-space:nowrap;line-height:1;">1924-2012</div><div class="a" style="left:545px;top:732.5px;font-size:10.4px;color:#333;white-space:nowrap;line-height:1;">Per Participant</div><div class="a" style="left:123px;top:748.3px;font-size:10.1px;color:#333;white-space:nowrap;line-height:1;">United States</div><div class="a" style="right:1636px;top:748px;font-size:10.4px;color:#333;white-space:nowrap;line-height:1;text-align:right;">46</div><div class="a" style="right:1583px;top:748px;font-size:10.4px;color:#333;white-space:nowrap;line-height:1;text-align:right;">29</div><div class="a" style="right:1527px;top:748px;font-size:10.4px;color:#333;white-space:nowrap;line-height:1;text-align:right;">29</div><div class="a" style="left:396px;top:745px;width:66px;height:16px;border:1px solid #333399;background:#fff"></div><div class="a" style="right:1461px;top:748px;font-size:10.4px;color:#222;white-space:nowrap;line-height:1;text-align:right;font-weight:bold;letter-spacing:0px">104</div><div class="a" style="right:1288px;top:748px;font-size:10.4px;color:#333;white-space:nowrap;line-height:1;text-align:right;">0.59</div><div class="a" style="left:123px;top:764.3px;font-size:10.1px;color:#333;white-space:nowrap;line-height:1;">China (CHN)</div><div class="a" style="right:1636px;top:764px;font-size:10.4px;color:#333;white-space:nowrap;line-height:1;text-align:right;">38</div><div class="a" style="right:1583px;top:764px;font-size:10.4px;color:#333;white-space:nowrap;line-height:1;text-align:right;">27</div><div class="a" style="right:1527px;top:764px;font-size:10.4px;color:#333;white-space:nowrap;line-height:1;text-align:right;">23</div><div class="a" style="left:396px;top:760px;width:66px;height:17px;border:1px solid #333399;background:#fff"></div><div class="a" style="right:1461px;top:764px;font-size:10.4px;color:#222;white-space:nowrap;line-height:1;text-align:right;font-weight:bold;letter-spacing:0px">88</div><div class="a" style="right:1288px;top:764px;font-size:10.4px;color:#333;white-space:nowrap;line-height:1;text-align:right;">1.10</div><div class="a" style="left:123px;top:779.3px;font-size:10.1px;color:#333;white-space:nowrap;line-height:1;">Russia (RUS)</div><div class="a" style="right:1636px;top:779px;font-size:10.4px;color:#333;white-space:nowrap;line-height:1;text-align:right;">24</div><div class="a" style="right:1583px;top:779px;font-size:10.4px;color:#333;white-space:nowrap;line-height:1;text-align:right;">26</div><div class="a" style="right:1527px;top:779px;font-size:10.4px;color:#333;white-space:nowrap;line-height:1;text-align:right;">32</div><div class="a" style="left:396px;top:776px;width:66px;height:16px;border:1px solid #333399;background:#ccccff"></div><div class="a" style="right:1461px;top:779px;font-size:10.4px;color:#222;white-space:nowrap;line-height:1;text-align:right;font-weight:bold;letter-spacing:0px">82</div><div class="a" style="right:1288px;top:779px;font-size:10.4px;color:#333;white-space:nowrap;line-height:1;text-align:right;">2.41</div><div class="a" style="left:123px;top:794.3px;font-size:10.1px;color:#333;white-space:nowrap;line-height:1;">Great Britain (GBR)</div><div class="a" style="right:1636px;top:794px;font-size:10.4px;color:#333;white-space:nowrap;line-height:1;text-align:right;">29</div><div class="a" style="right:1583px;top:794px;font-size:10.4px;color:#333;white-space:nowrap;line-height:1;text-align:right;">17</div><div class="a" style="right:1527px;top:794px;font-size:10.4px;color:#333;white-space:nowrap;line-height:1;text-align:right;">19</div><div class="a" style="left:396px;top:791px;width:66px;height:16px;border:1px solid #333399;background:#ccccff"></div><div class="a" style="right:1461px;top:794px;font-size:10.4px;color:#222;white-space:nowrap;line-height:1;text-align:right;font-weight:bold;letter-spacing:0px">65</div><div class="a" style="right:1288px;top:794px;font-size:10.4px;color:#333;white-space:nowrap;line-height:1;text-align:right;">0.71</div><div class="a" style="left:123px;top:810.3px;font-size:10.1px;color:#333;white-space:nowrap;line-height:1;">Germany (GER)</div><div class="a" style="right:1636px;top:810px;font-size:10.4px;color:#333;white-space:nowrap;line-height:1;text-align:right;">11</div><div class="a" style="right:1583px;top:810px;font-size:10.4px;color:#333;white-space:nowrap;line-height:1;text-align:right;">19</div><div class="a" style="right:1527px;top:810px;font-size:10.4px;color:#333;white-space:nowrap;line-height:1;text-align:right;">14</div><div class="a" style="left:396px;top:806px;width:66px;height:17px;border:1px solid #333399;background:#fff"></div><div class="a" style="right:1461px;top:810px;font-size:10.4px;color:#222;white-space:nowrap;line-height:1;text-align:right;font-weight:bold;letter-spacing:0px">44</div><div class="a" style="right:1288px;top:810px;font-size:10.4px;color:#333;white-space:nowrap;line-height:1;text-align:right;">0.94</div><div class="a" style="left:123px;top:825.3px;font-size:10.1px;color:#333;white-space:nowrap;line-height:1;">Japan (JPN)</div><div class="a" style="right:1636px;top:825px;font-size:10.4px;color:#333;white-space:nowrap;line-height:1;text-align:right;">7</div><div class="a" style="right:1583px;top:825px;font-size:10.4px;color:#333;white-space:nowrap;line-height:1;text-align:right;">14</div><div class="a" style="right:1527px;top:825px;font-size:10.4px;color:#333;white-space:nowrap;line-height:1;text-align:right;">17</div><div class="a" style="left:396px;top:822px;width:66px;height:16px;border:1px solid #333399;background:#fff"></div><div class="a" style="right:1461px;top:825px;font-size:10.4px;color:#222;white-space:nowrap;line-height:1;text-align:right;font-weight:bold;letter-spacing:0px">38</div><div class="a" style="right:1288px;top:825px;font-size:10.4px;color:#333;white-space:nowrap;line-height:1;text-align:right;">1.27</div><div class="a" style="left:123px;top:840.3px;font-size:10.1px;color:#333;white-space:nowrap;line-height:1;">Australia (AUS)</div><div class="a" style="right:1636px;top:840px;font-size:10.4px;color:#333;white-space:nowrap;line-height:1;text-align:right;">7</div><div class="a" style="right:1583px;top:840px;font-size:10.4px;color:#333;white-space:nowrap;line-height:1;text-align:right;">16</div><div class="a" style="right:1527px;top:840px;font-size:10.4px;color:#333;white-space:nowrap;line-height:1;text-align:right;">12</div><div class="a" style="left:396px;top:837px;width:66px;height:16px;border:1px solid #333399;background:#ccccff"></div><div class="a" style="right:1461px;top:840px;font-size:10.4px;color:#222;white-space:nowrap;line-height:1;text-align:right;font-weight:bold;letter-spacing:0px">35</div><div class="a" style="right:1288px;top:840px;font-size:10.4px;color:#333;white-space:nowrap;line-height:1;text-align:right;">0.88</div><div class="a" style="left:123px;top:856.3px;font-size:10.1px;color:#333;white-space:nowrap;line-height:1;">France (FRA)</div><div class="a" style="right:1636px;top:856px;font-size:10.4px;color:#333;white-space:nowrap;line-height:1;text-align:right;">11</div><div class="a" style="right:1583px;top:856px;font-size:10.4px;color:#333;white-space:nowrap;line-height:1;text-align:right;">11</div><div class="a" style="right:1527px;top:856px;font-size:10.4px;color:#333;white-space:nowrap;line-height:1;text-align:right;">12</div><div class="a" style="left:396px;top:852px;width:66px;height:17px;border:1px solid #333399;background:#ccccff"></div><div class="a" style="right:1461px;top:856px;font-size:10.4px;color:#222;white-space:nowrap;line-height:1;text-align:right;font-weight:bold;letter-spacing:0px">34</div><div class="a" style="right:1288px;top:856px;font-size:10.4px;color:#333;white-space:nowrap;line-height:1;text-align:right;">0.31</div><div class="a" style="left:123px;top:871.3px;font-size:10.1px;color:#333;white-space:nowrap;line-height:1;">Italy (ITA)</div><div class="a" style="right:1636px;top:871px;font-size:10.4px;color:#333;white-space:nowrap;line-height:1;text-align:right;">8</div><div class="a" style="right:1583px;top:871px;font-size:10.4px;color:#333;white-space:nowrap;line-height:1;text-align:right;">9</div><div class="a" style="right:1527px;top:871px;font-size:10.4px;color:#333;white-space:nowrap;line-height:1;text-align:right;">11</div><div class="a" style="left:396px;top:868px;width:66px;height:16px;border:1px solid #333399;background:#fff"></div><div class="a" style="right:1461px;top:871px;font-size:10.4px;color:#222;white-space:nowrap;line-height:1;text-align:right;font-weight:bold;letter-spacing:0px">28</div><div class="a" style="right:1288px;top:871px;font-size:10.4px;color:#333;white-space:nowrap;line-height:1;text-align:right;">0.26</div><div class="a" style="left:123px;top:886.3px;font-size:10.1px;color:#333;white-space:nowrap;line-height:1;">South Korea (KOR)</div><div class="a" style="right:1636px;top:886px;font-size:10.4px;color:#333;white-space:nowrap;line-height:1;text-align:right;">13</div><div class="a" style="right:1583px;top:886px;font-size:10.4px;color:#333;white-space:nowrap;line-height:1;text-align:right;">8</div><div class="a" style="right:1527px;top:886px;font-size:10.4px;color:#333;white-space:nowrap;line-height:1;text-align:right;">7</div><div class="a" style="left:396px;top:883px;width:66px;height:16px;border:1px solid #333399;background:#fff"></div><div class="a" style="right:1461px;top:886px;font-size:10.4px;color:#222;white-space:nowrap;line-height:1;text-align:right;font-weight:bold;letter-spacing:0px">28</div><div class="a" style="right:1288px;top:886px;font-size:10.4px;color:#333;white-space:nowrap;line-height:1;text-align:right;">0.28</div><div class="a" style="left:123px;top:902.3px;font-size:10.1px;color:#333;white-space:nowrap;line-height:1;">Netherlands (NED)</div><div class="a" style="right:1636px;top:902px;font-size:10.4px;color:#333;white-space:nowrap;line-height:1;text-align:right;">6</div><div class="a" style="right:1583px;top:902px;font-size:10.4px;color:#333;white-space:nowrap;line-height:1;text-align:right;">6</div><div class="a" style="right:1527px;top:902px;font-size:10.4px;color:#333;white-space:nowrap;line-height:1;text-align:right;">8</div><div class="a" style="left:396px;top:898px;width:66px;height:17px;border:1px solid #333399;background:#fff"></div><div class="a" style="right:1461px;top:902px;font-size:10.4px;color:#222;white-space:nowrap;line-height:1;text-align:right;font-weight:bold;letter-spacing:0px">20</div><div class="a" style="right:1288px;top:902px;font-size:10.4px;color:#333;white-space:nowrap;line-height:1;text-align:right;">0.18</div><div class="a" style="left:123px;top:917.3px;font-size:10.1px;color:#333;white-space:nowrap;line-height:1;">Ukraine (UKR)</div><div class="a" style="right:1636px;top:917px;font-size:10.4px;color:#333;white-space:nowrap;line-height:1;text-align:right;">6</div><div class="a" style="right:1583px;top:917px;font-size:10.4px;color:#333;white-space:nowrap;line-height:1;text-align:right;">5</div><div class="a" style="right:1527px;top:917px;font-size:10.4px;color:#333;white-space:nowrap;line-height:1;text-align:right;">9</div><div class="a" style="left:396px;top:914px;width:66px;height:16px;border:1px solid #333399;background:#ccccff"></div><div class="a" style="right:1461px;top:917px;font-size:10.4px;color:#222;white-space:nowrap;line-height:1;text-align:right;font-weight:bold;letter-spacing:0px">20</div><div class="a" style="right:1288px;top:917px;font-size:10.4px;color:#333;white-space:nowrap;line-height:1;text-align:right;">0.43</div><div class="a" style="left:123px;top:932.3px;font-size:10.1px;color:#333;white-space:nowrap;line-height:1;">Hungary (HUN)</div><div class="a" style="right:1636px;top:932px;font-size:10.4px;color:#333;white-space:nowrap;line-height:1;text-align:right;">8</div><div class="a" style="right:1583px;top:932px;font-size:10.4px;color:#333;white-space:nowrap;line-height:1;text-align:right;">4</div><div class="a" style="right:1527px;top:932px;font-size:10.4px;color:#333;white-space:nowrap;line-height:1;text-align:right;">6</div><div class="a" style="left:396px;top:929px;width:66px;height:16px;border:1px solid #333399;background:#fff"></div><div class="a" style="right:1461px;top:932px;font-size:10.4px;color:#222;white-space:nowrap;line-height:1;text-align:right;font-weight:bold;letter-spacing:0px">18</div><div class="a" style="right:1288px;top:932px;font-size:10.4px;color:#333;white-space:nowrap;line-height:1;text-align:right;">0.47</div><div class="a" style="left:123px;top:948.3px;font-size:10.1px;color:#333;white-space:nowrap;line-height:1;">Cuba (CUB)</div><div class="a" style="right:1636px;top:948px;font-size:10.4px;color:#333;white-space:nowrap;line-height:1;text-align:right;">5</div><div class="a" style="right:1583px;top:948px;font-size:10.4px;color:#333;white-space:nowrap;line-height:1;text-align:right;">3</div><div class="a" style="right:1527px;top:948px;font-size:10.4px;color:#333;white-space:nowrap;line-height:1;text-align:right;">6</div><div class="a" style="left:396px;top:944px;width:66px;height:17px;border:1px solid #333399;background:#ccccff"></div><div class="a" style="right:1461px;top:948px;font-size:10.4px;color:#222;white-space:nowrap;line-height:1;text-align:right;font-weight:bold;letter-spacing:0px">14</div><div class="a" style="right:1288px;top:948px;font-size:10.4px;color:#333;white-space:nowrap;line-height:1;text-align:right;">0.74</div><div class="a" style="left:123px;top:963.3px;font-size:10.1px;color:#333;white-space:nowrap;line-height:1;">Kazakhstan (KAZ)</div><div class="a" style="right:1636px;top:963px;font-size:10.4px;color:#333;white-space:nowrap;line-height:1;text-align:right;">7</div><div class="a" style="right:1583px;top:963px;font-size:10.4px;color:#333;white-space:nowrap;line-height:1;text-align:right;">1</div><div class="a" style="right:1527px;top:963px;font-size:10.4px;color:#333;white-space:nowrap;line-height:1;text-align:right;">5</div><div class="a" style="left:396px;top:960px;width:66px;height:16px;border:1px solid #333399;background:#ccccff"></div><div class="a" style="right:1461px;top:963px;font-size:10.4px;color:#222;white-space:nowrap;line-height:1;text-align:right;font-weight:bold;letter-spacing:0px">13</div><div class="a" style="right:1288px;top:963px;font-size:10.4px;color:#333;white-space:nowrap;line-height:1;text-align:right;">0.14</div><div class="a" style="left:123px;top:978.3px;font-size:10.1px;color:#333;white-space:nowrap;line-height:1;">New Zealand (NZL)</div><div class="a" style="right:1636px;top:978px;font-size:10.4px;color:#333;white-space:nowrap;line-height:1;text-align:right;">6</div><div class="a" style="right:1583px;top:978px;font-size:10.4px;color:#333;white-space:nowrap;line-height:1;text-align:right;">2</div><div class="a" style="right:1527px;top:978px;font-size:10.4px;color:#333;white-space:nowrap;line-height:1;text-align:right;">5</div><div class="a" style="left:396px;top:975px;width:66px;height:16px;border:1px solid #333399;background:#ccccff"></div><div class="a" style="right:1461px;top:978px;font-size:10.4px;color:#222;white-space:nowrap;line-height:1;text-align:right;font-weight:bold;letter-spacing:0px">13</div><div class="a" style="right:1288px;top:978px;font-size:10.4px;color:#333;white-space:nowrap;line-height:1;text-align:right;">0.25</div><div class="a" style="left:123px;top:994.3px;font-size:10.1px;color:#333;white-space:nowrap;line-height:1;">Iran (IRI)</div><div class="a" style="right:1636px;top:994px;font-size:10.4px;color:#333;white-space:nowrap;line-height:1;text-align:right;">4</div><div class="a" style="right:1583px;top:994px;font-size:10.4px;color:#333;white-space:nowrap;line-height:1;text-align:right;">5</div><div class="a" style="right:1527px;top:994px;font-size:10.4px;color:#333;white-space:nowrap;line-height:1;text-align:right;">3</div><div class="a" style="left:396px;top:990px;width:66px;height:17px;border:1px solid #333399;background:#ccccff"></div><div class="a" style="right:1461px;top:994px;font-size:10.4px;color:#222;white-space:nowrap;line-height:1;text-align:right;font-weight:bold;letter-spacing:0px">12</div><div class="a" style="right:1288px;top:994px;font-size:10.4px;color:#333;white-space:nowrap;line-height:1;text-align:right;">0.13</div><div class="a" style="left:123px;top:1009.3px;font-size:10.1px;color:#333;white-space:nowrap;line-height:1;">Jamaica (JAM)</div><div class="a" style="right:1636px;top:1009px;font-size:10.4px;color:#333;white-space:nowrap;line-height:1;text-align:right;">4</div><div class="a" style="right:1583px;top:1009px;font-size:10.4px;color:#333;white-space:nowrap;line-height:1;text-align:right;">4</div><div class="a" style="right:1527px;top:1009px;font-size:10.4px;color:#333;white-space:nowrap;line-height:1;text-align:right;">4</div><div class="a" style="left:396px;top:1006px;width:66px;height:16px;border:1px solid #333399;background:#fff"></div><div class="a" style="right:1461px;top:1009px;font-size:10.4px;color:#222;white-space:nowrap;line-height:1;text-align:right;font-weight:bold;letter-spacing:0px">12</div><div class="a" style="right:1288px;top:1009px;font-size:10.4px;color:#333;white-space:nowrap;line-height:1;text-align:right;">0.08</div><div class="a" style="left:123px;top:1024.3px;font-size:10.1px;color:#333;white-space:nowrap;line-height:1;">Czech Republic (CZE)</div><div class="a" style="right:1636px;top:1024px;font-size:10.4px;color:#333;white-space:nowrap;line-height:1;text-align:right;">4</div><div class="a" style="right:1583px;top:1024px;font-size:10.4px;color:#333;white-space:nowrap;line-height:1;text-align:right;">3</div><div class="a" style="right:1527px;top:1024px;font-size:10.4px;color:#333;white-space:nowrap;line-height:1;text-align:right;">3</div><div class="a" style="left:396px;top:1021px;width:66px;height:16px;border:1px solid #333399;background:#fff"></div><div class="a" style="right:1461px;top:1024px;font-size:10.4px;color:#222;white-space:nowrap;line-height:1;text-align:right;font-weight:bold;letter-spacing:0px">10</div><div class="a" style="right:1288px;top:1024px;font-size:10.4px;color:#333;white-space:nowrap;line-height:1;text-align:right;">0.05</div><div class="a" style="left:65px;top:1034px;width:1121px;height:23px;background:#f2f1f0;"></div><div class="a" style="left:65px;top:1034px;width:1121px;height:1px;background:#cfcdc9;"></div><div class="a" style="left:75px;top:1040px;font-size:12px;color:#3c3c3c;white-space:nowrap;line-height:1;">Page 1 / 1</div><div class="sep" style="left:191px;top:1037px;height:18px"></div><div class="sep" style="left:320px;top:1037px;height:18px"></div><div class="a" style="left:329px;top:1040px;font-size:12px;color:#3c3c3c;white-space:nowrap;line-height:1;">PageStyle_2012 Medal Standings</div><div class="sep" style="left:570px;top:1037px;height:18px"></div><div class="sep" style="left:637px;top:1037px;height:18px"></div><div class="sep" style="left:667px;top:1037px;height:18px"></div><div class="sep" style="left:696px;top:1037px;height:18px"></div><div class="sep" style="left:725px;top:1037px;height:18px"></div><div class="sep" style="left:1000px;top:1037px;height:18px"></div><div class="sep" style="left:1137px;top:1037px;height:18px"></div><div class="a" style="left:646px;top:1042px;width:10px;height:8px;background:#777;"></div><div class="a" style="left:656px;top:1040px;width:1px;height:12px;background:#555;"></div><div class="a" style="left:677px;top:1039px;width:10px;height:13px;border:1px solid #555;background:#fff"></div><div class="a" style="left:683px;top:1037px;color:#c00;font-size:11px;font-weight:bold">*</div><div class="a" style="left:1004px;top:1045px;width:7px;height:2px;background:#666;"></div><div class="a" style="left:1018px;top:1045px;width:100px;height:1px;background:#9a9996;"></div><div class="a" style="left:1062px;top:1041px;width:9px;height:9px;border-radius:50%;background:#fff;border:1px solid #777"></div><div class="a" style="left:1121px;top:1045px;width:8px;height:2px;background:#666;"></div><div class="a" style="left:1124px;top:1042px;width:2px;height:8px;background:#666;"></div><div class="a" style="left:1145px;top:1040px;font-size:12px;color:#3c3c3c;white-space:nowrap;line-height:1;">100%</div><div class="tbf" style="left:1194px;top:93px;width:722px;height:28px;border-radius:6px 6px 0 0"></div><div class="cb" style="left:1201.5px;top:99.5px;background:radial-gradient(circle at 50% 40%,#f26b3a,#d9470f 80%)"><svg width="16" height="16"><path d="M5.2 5.2L10.8 10.8M10.8 5.2L5.2 10.8" stroke="#3b1f12" stroke-width="1.3"/></svg></div><div class="cb" style="left:1220.5px;top:99.5px;background:linear-gradient(#7a766e,#57544d);box-shadow:inset 0 0 0 1px #4a4842"><svg width="16" height="16"><path d="M4.5 8H11.5" stroke="#34332f" stroke-width="1.3"/></svg></div><div class="cb" style="left:1239.5px;top:99.5px;background:linear-gradient(#7a766e,#57544d);box-shadow:inset 0 0 0 1px #4a4842"><svg width="16" height="16"><rect x="5" y="5" width="6" height="6" fill="none" stroke="#34332f" stroke-width="1.2"/></svg></div><div class="tt" style="left:1267px;top:99px;color:#dfdbd2;font-size:15.1px">luke@Studio-XPS-435MT: ~/libreoffice/instdir/program</div><div class="term" style="left:1194px;top:121px;width:722px;height:434px;padding-left:1px;padding-top:4px"><span class="g">libodfgen-0.1.so.1</span>         <span class="g">unoinfo</span>
<span class="g">liboffacclo.so</span>             <span class="g">unopkg</span>
<span class="g">libofficebean.so</span>           <span class="g">unopkg.bin</span>
<span class="g">liboglcanvaslo.so</span>          uno.py
<span class="g">libOGLTranslo.so</span>           unorc
<span class="g">libooxlo.so</span>                <span class="g">uri-encode</span>
<span class="g">libOsiClp.so.1</span>             versionrc
<span class="g">libOsi.so.1</span>                <span class="bl">wizards</span>
<span class="g">libpackage2.so</span>             <span class="g">xid-fullscreen-on-all-monitors</span>
<span class="g">libpasswordcontainerlo.so</span>  <span class="g">xpdfimport</span>
luke@Studio-XPS-435MT:~/libreoffice/instdir/program$ ./soffice
^C
luke@Studio-XPS-435MT:~/libreoffice/instdir/program$ ./soffice
luke@Studio-XPS-435MT:~/libreoffice/instdir/program$ rm ../user/
autocorr/                  extensions/
autotext/                  gallery/
backup/                    psprint/
basic/                     registrymodifications.xcu
config/                    uno_packages/
database/
luke@Studio-XPS-435MT:~/libreoffice/instdir/program$ rm ../user/registrymodifica
tions.xcu
luke@Studio-XPS-435MT:~/libreoffice/instdir/program$ ./soffice
</div><div class="a" style="left:1195px;top:536px;width:10px;height:18px;background:#fff"></div><div class="a" style="left:1913px;top:521px;width:3px;height:34px;background:#c8c8c8"></div><div class="tb" style="left:1200px;top:592px;width:720px;height:28px;border-radius:6px 6px 0 0"></div><div class="cb" style="left:1207.5px;top:598.5px;background:#56554f"><svg width="16" height="16"><path d="M5.2 5.2L10.8 10.8M10.8 5.2L5.2 10.8" stroke="#3a3935" stroke-width="1.1"/></svg></div><div class="cb" style="left:1226.5px;top:598.5px;background:#56554f"><svg width="16" height="16"><path d="M4.5 8H11.5" stroke="#3a3935" stroke-width="1.3"/></svg></div><div class="cb" style="left:1245.5px;top:598.5px;background:#56554f"><svg width="16" height="16"><rect x="5" y="5" width="6" height="6" fill="none" stroke="#3a3935" stroke-width="1.2"/></svg></div><div class="tt" style="left:1273px;top:598px;font-size:15.2px">luke@Studio-XPS-435MT: ~/libreoffice</div><div class="term" style="left:1200px;top:620px;width:720px;height:434px;padding-left:1px;padding-top:4px"><span class="bl">dictionaries</span>          <span class="bl">pyuno</span>                      unusedcode.exclude
<span class="bl">distro-configs</span>        <span class="bl">qadevOOo</span>                   unusedcode.README
download.lst          <span class="bl">readlicense_oo</span>             <span class="bl">ure</span>
<span class="bl">drawinglayer</span>          README.Android             <span class="bl">uui</span>
<span class="bl">dtrans</span>                README.Code                <span class="bl">vbahelper</span>
<span class="bl">editeng</span>               README.cross               <span class="bl">vcl</span>
<span class="bl">embeddedobj</span>           README.Solaris             <span class="bl">winaccessibility</span>
<span class="bl">embedserv</span>             <span class="bl">registry</span>                   <span class="bl">wizards</span>
<span class="bl">eventattacher</span>         <span class="bl">remotebridges</span>              <span class="bl">workdir</span>
<span class="bl">extensions</span>            <span class="bl">reportbuilder</span>              <span class="bl">writerfilter</span>
<span class="bl">external</span>              <span class="bl">reportdesign</span>               <span class="bl">writerperfect</span>
<span class="bl">extras</span>                RepositoryExternal.mk      <span class="bl">xmerge</span>
<span class="bl">filter</span>                RepositoryFixes.mk         <span class="bl">xmlhelp</span>
<span class="bl">forms</span>                 Repository.mk              <span class="bl">xmloff</span>
<span class="bl">formula</span>               RepositoryModule_build.mk  <span class="bl">xmlreader</span>
<span class="bl">fpicker</span>               RepositoryModule_host.mk   <span class="bl">xmlscript</span>
<span class="bl">framework</span>             <span class="bl">ridljar</span>                    <span class="bl">xmlsecurity</span>
<span class="g">g</span>                     <span class="bl">rsc</span>
luke@Studio-XPS-435MT:~/libreoffice$ git status
On branch master
Your branch is up-to-date with 'origin/master'.

nothing to commit, working directory clean
luke@Studio-XPS-435MT:~/libreoffice$ cd pro</div><div class="a" style="left:1588px;top:1036px;width:10px;height:18px;border:1px solid #fff"></div><div class="a" style="left:1919px;top:953px;width:1px;height:101px;background:#f08a4a"></div><div class="a" style="left:0px;top:24px;width:65px;height:1056px;background:linear-gradient(#541318,#60171b 25%,#6c1c1f 60%,#7a2322 100%);"></div><div class="a" style="left:64px;top:24px;width:1px;height:1056px;background:#2a0a0e;"></div><div class="a" style="left:6px;top:30px;width:52px;height:52px;border-radius:5px;background:radial-gradient(ellipse at 50% 0%,rgba(255,255,255,.28),transparent 50%),linear-gradient(135deg,#c0545a,#932a2e 60%,#a33a3c);box-shadow:inset 0 1px 0 rgba(255,255,255,.25)"></div><svg class="a" style="left:6px;top:30px" width="52" height="52" viewBox="0 0 52 52"><circle cx="26" cy="26" r="14" fill="#fff"/><circle cx="26" cy="26" r="7.3" fill="none" stroke="#6a0a12" stroke-width="3" stroke-dasharray="11.3 4" stroke-dashoffset="5.85"/><circle cx="16" cy="26" r="2.5" fill="#6a0a12"/><circle cx="31.2" cy="17" r="2.5" fill="#6a0a12"/><circle cx="31.2" cy="35" r="2.5" fill="#6a0a12"/></svg><div class="a" style="left:6px;top:89px;width:52px;height:52px;border-radius:5px;background:radial-gradient(ellipse at 50% 0%,rgba(255,255,255,.28),transparent 50%),radial-gradient(ellipse at 50% 0%,rgba(255,255,255,.35),transparent 55%),linear-gradient(#8e3a40,#7e2c32);box-shadow:inset 0 1px 0 rgba(255,255,255,.25)"></div><svg class="a" style="left:6px;top:89px" width="52" height="52" viewBox="0 0 52 52"><path d="M13 9h38l2 5H11z" transform="translate(-6 0)" fill="#e4e4e4"/><rect x="5" y="13" width="42" height="35" fill="#c8c8c8"/><rect x="8" y="17" width="36" height="9" fill="#333"/><rect x="9" y="19" width="34" height="7" fill="#f0a050"/><rect x="10" y="21" width="31" height="1.5" fill="#fff"/><rect x="7" y="26" width="38" height="22" fill="#b4b4b4"/><rect x="20" y="33" width="12" height="7" rx="1.5" fill="#ddd" stroke="#444" stroke-width="1.2"/></svg><div class="a" style="left:6px;top:148px;width:52px;height:52px;border-radius:5px;background:radial-gradient(ellipse at 50% 0%,rgba(255,255,255,.28),transparent 50%),linear-gradient(#c08a64,#a8673e);box-shadow:inset 0 1px 0 rgba(255,255,255,.25)"></div><svg class="a" style="left:6px;top:148px" width="52" height="52" viewBox="0 0 52 52"><circle cx="28" cy="21" r="15.5" fill="#2a5ea8"/><circle cx="30" cy="16" r="9" fill="#4a9ad8" opacity=".8"/><path d="M13 11c-5 6-6 16-1 24 6 9 19 12 28 7 7-4 10-12 9-20-1 6-6 12-14 13-8 1-14-3-16-9-3 1-5-1-5-3-3-2-2-6-1-8z" fill="#e8641e"/><path d="M13 11l1-6 4 5z" fill="#e8641e"/><path d="M41 8c6 4 9 11 8 16l-4 3c1-6-1-13-4-19z" fill="#f7b52a"/><path d="M16 36c6 5 16 6 22 2" stroke="#f08a30" stroke-width="2" fill="none"/></svg><div class="a" style="left:6px;top:207px;width:52px;height:52px;border-radius:5px;background:radial-gradient(ellipse at 50% 0%,rgba(255,255,255,.28),transparent 50%),linear-gradient(#d8d6d6,#b4b0b0);box-shadow:inset 0 1px 0 rgba(255,255,255,.25)"></div><svg class="a" style="left:6px;top:207px" width="52" height="52" viewBox="0 0 52 52"><rect x="10" y="12" width="36" height="32" fill="#fafafa"/><rect x="13" y="15" width="30" height="26" fill="#2b2b2b"/><rect x="13" y="15" width="30" height="10" fill="#3a3a3a"/><path d="M17 21l6 4-6 4" stroke="#fff" stroke-width="2.2" fill="none"/><rect x="26" y="31" width="8" height="2" fill="#fff"/></svg><div class="a" style="left:6px;top:266px;width:52px;height:52px;border-radius:5px;background:radial-gradient(ellipse at 50% 0%,rgba(255,255,255,.28),transparent 50%),linear-gradient(#8e3238,#6e1c22);box-shadow:inset 0 1px 0 rgba(255,255,255,.25)"></div><svg class="a" style="left:6px;top:266px" width="52" height="52" viewBox="0 0 52 52"><path d="M8 4h26l10 10v34H8z" fill="#1a4f8a"/><path d="M11 7h22l8 8v30H11z" fill="#f4f4f4"/><path d="M34 4l10 10H34z" fill="#4a90d0"/><path d="M15 22h10M15 26h10M15 30h22M15 34h22M15 38h16" stroke="#1e4f8a" stroke-width="2"/><rect x="27" y="19" width="11" height="9" fill="#fff" stroke="#1e4f8a"/><path d="M28 27l3-4 3 3 2-2 2 3z" fill="#555"/></svg><div class="a" style="left:6px;top:325px;width:52px;height:52px;border-radius:5px;background:radial-gradient(ellipse at 50% 0%,rgba(255,255,255,.28),transparent 50%),linear-gradient(#5cc65c,#2e962e);box-shadow:inset 0 1px 0 rgba(255,255,255,.25)"></div><svg class="a" style="left:6px;top:325px" width="52" height="52" viewBox="0 0 52 52"><path d="M8 4h26l10 10v34H8z" fill="#1e7a1e"/><path d="M11 7h22l8 8v30H11z" fill="#f4f4f4"/><path d="M34 4l10 10H34z" fill="#6ccc6c"/><rect x="14" y="20" width="20" height="16" fill="#3aa53a"/><path d="M14 24h20M14 28h20M14 32h20M20 20v16M27 20v16" stroke="#fff"/><rect x="30" y="30" width="9" height="9" fill="#fff" stroke="#555" stroke-width=".6"/><rect x="32" y="34" width="1.6" height="4" fill="#f08a30"/><rect x="34.5" y="32" width="1.6" height="6" fill="#3a7ad0"/></svg><div class="a" style="left:6px;top:384px;width:52px;height:52px;border-radius:5px;background:radial-gradient(ellipse at 50% 0%,rgba(255,255,255,.28),transparent 50%),linear-gradient(#8e3238,#6e1c22);box-shadow:inset 0 1px 0 rgba(255,255,255,.25)"></div><svg class="a" style="left:6px;top:384px" width="52" height="52" viewBox="0 0 52 52"><path d="M8 4h26l10 10v34H8z" fill="#8a3a10"/><path d="M11 7h22l8 8v30H11z" fill="#f4f4f4"/><path d="M34 4l10 10H34z" fill="#e08040"/><rect x="14" y="20" width="24" height="15" fill="#fff" stroke="#b05020" stroke-width="2"/><path d="M17 24h8M17 27h8M17 30h8" stroke="#b05020" stroke-width="1.5"/><rect x="28" y="24" width="7" height="6" fill="#4a8a4a"/><path d="M26 35v4M20 41l6-3 6 3" stroke="#555" fill="none"/></svg><div class="a" style="left:6px;top:443px;width:52px;height:52px;border-radius:5px;background:radial-gradient(ellipse at 50% 0%,rgba(255,255,255,.28),transparent 50%),linear-gradient(#8a2a30,#6e1c22);box-shadow:inset 0 1px 0 rgba(255,255,255,.25)"></div><svg class="a" style="left:6px;top:443px" width="52" height="52" viewBox="0 0 52 52"><path d="M8 14h36v32H8z" fill="#ea6a30"/><path d="M18 14c0-8 16-8 16 0" stroke="#ea6a30" stroke-width="3" fill="none"/><path d="M19 38l7-16 7 16M21 33h10" stroke="#fff" stroke-width="3" fill="none"/></svg><div class="a" style="left:6px;top:502px;width:52px;height:52px;border-radius:5px;background:radial-gradient(ellipse at 50% 0%,rgba(255,255,255,.28),transparent 50%),linear-gradient(#8e3238,#6e1c22);box-shadow:inset 0 1px 0 rgba(255,255,255,.25)"></div><svg class="a" style="left:6px;top:502px" width="52" height="52" viewBox="0 0 52 52"><rect x="5" y="5" width="42" height="45" rx="3" fill="#fafafa"/><text x="11" y="37" font-size="34" font-weight="bold" font-family="Liberation Sans" fill="#222">a</text><path d="M9 41c10 6 26 6 34 0" stroke="#f90" stroke-width="3" fill="none"/><path d="M40 38l4 3-5 2" stroke="#f90" stroke-width="2" fill="none"/></svg><div class="a" style="left:6px;top:561px;width:52px;height:52px;border-radius:5px;background:radial-gradient(ellipse at 50% 0%,rgba(255,255,255,.28),transparent 50%),linear-gradient(#8e3238,#6e1c22);box-shadow:inset 0 1px 0 rgba(255,255,255,.25)"></div><svg class="a" style="left:6px;top:561px" width="52" height="52" viewBox="0 0 52 52"><rect x="22.5" y="4" width="7" height="8" fill="#e6e6e6" transform="rotate(0 26 26)"/><rect x="22.5" y="4" width="7" height="8" fill="#e6e6e6" transform="rotate(45 26 26)"/><rect x="22.5" y="4" width="7" height="8" fill="#e6e6e6" transform="rotate(90 26 26)"/><rect x="22.5" y="4" width="7" height="8" fill="#e6e6e6" transform="rotate(135 26 26)"/><rect x="22.5" y="4" width="7" height="8" fill="#e6e6e6" transform="rotate(180 26 26)"/><rect x="22.5" y="4" width="7" height="8" fill="#e6e6e6" transform="rotate(225 26 26)"/><rect x="22.5" y="4" width="7" height="8" fill="#e6e6e6" transform="rotate(270 26 26)"/><rect x="22.5" y="4" width="7" height="8" fill="#e6e6e6" transform="rotate(315 26 26)"/><circle cx="26" cy="26" r="16" fill="#e6e6e6"/><circle cx="26" cy="26" r="11" fill="#d2d2d2"/><circle cx="26" cy="26" r="5.5" fill="#7a2026"/><path d="M11 42L37 16" stroke="#c02828" stroke-width="6" stroke-linecap="round"/><path d="M11 42L37 16" stroke="#e25050" stroke-width="2" stroke-linecap="round"/><path d="M35 10a7 7 0 1 0 9 9l-4-1-3-3-1-4z" fill="#e6e6e6" stroke="#bbb" stroke-width=".8"/><circle cx="12" cy="41" r="1.5" fill="#7a2026"/></svg><div class="a" style="left:6px;top:620px;width:52px;height:52px;border-radius:5px;background:radial-gradient(ellipse at 50% 0%,rgba(255,255,255,.28),transparent 50%),linear-gradient(#8e3238,#6e1c22);box-shadow:inset 0 1px 0 rgba(255,255,255,.25)"></div><svg class="a" style="left:6px;top:620px" width="52" height="52" viewBox="0 0 52 52"><path d="M6 40h40l-4 6H10z" fill="#f5a300"/><path d="M23 5h6l11 36H12z" fill="#f08a10"/><path d="M21 12h10l2.5 8h-15z" fill="#eee"/><path d="M17 26h18l2.5 8h-23z" fill="#eee"/><path d="M14 40c4 3 20 3 24 0" stroke="#d06a00" stroke-width="1.5" fill="none"/></svg><div class="a" style="left:6px;top:679px;width:52px;height:52px;border-radius:5px;background:radial-gradient(ellipse at 50% 0%,rgba(255,255,255,.28),transparent 50%),linear-gradient(#d0c8c8,#b0a8a8);box-shadow:inset 0 1px 0 rgba(255,255,255,.25)"></div><svg class="a" style="left:6px;top:679px" width="52" height="52" viewBox="0 0 52 52"><rect x="9" y="6" width="34" height="40" fill="#f6f6f8" stroke="#c8c8cc"/><path d="M11 12h30M11 16h30M11 20h30M11 24h30M11 28h30M11 32h30M11 36h30M11 40h30" stroke="#d8e0ee" stroke-width=".6"/><path d="M14 12v32" stroke="#f0b0b0" stroke-width=".6"/><path d="M15 15h18M15 17h14M15 19h20M15 21h16M15 27h18M15 29h20M15 31h14M15 37h20M15 39h16" stroke="#aaa" stroke-width=".5"/><path d="M30 23l10-10 4 4-10 10z" fill="#3a3a3a"/><path d="M40 13l3-3 4 4-3 3z" fill="#e890c8"/><path d="M30 23l4 4-5 2z" fill="#f0e070"/><path d="M29 29l1.2-1.2" stroke="#111" stroke-width="1.4"/></svg><div class="a" style="left:6px;top:738px;width:52px;height:52px;border-radius:5px;background:radial-gradient(ellipse at 50% 0%,rgba(255,255,255,.28),transparent 50%),linear-gradient(#c8c0c0,#a8a0a0);box-shadow:inset 0 1px 0 rgba(255,255,255,.25)"></div><svg class="a" style="left:6px;top:738px" width="52" height="52" viewBox="0 0 52 52"><path d="M7 3h28l12 12v35H7z" fill="#3a3a3a"/><path d="M9 5h25l11 11v32H9z" fill="#eeeeee"/><path d="M34 3l13 12H34z" fill="#888"/><path d="M34 5v10h11" fill="#bbb"/><rect x="9" y="5" width="3" height="43" fill="#bdbdbd" opacity=".6"/></svg><div class="a" style="left:6px;top:797px;width:52px;height:52px;border-radius:5px;background:radial-gradient(ellipse at 50% 0%,rgba(255,255,255,.28),transparent 50%),linear-gradient(#8e3a40,#702428);box-shadow:inset 0 1px 0 rgba(255,255,255,.25)"></div><svg class="a" style="left:6px;top:797px" width="52" height="52" viewBox="0 0 52 52"><path d="M11 10h30l6 26H5z" fill="#e2e2e2" stroke="#999" stroke-width=".8"/><ellipse cx="26" cy="23" rx="13" ry="8" fill="none" stroke="#b8b8b8" stroke-width="1.2"/><ellipse cx="26" cy="23" rx="3.5" ry="2" fill="none" stroke="#aaa"/><path d="M14 14c6 2 12 6 10 10" stroke="#bbb" fill="none"/><rect x="5" y="36" width="42" height="7" fill="#d8d8d8" stroke="#888" stroke-width=".6"/><rect x="8" y="38" width="14" height="3" fill="#222"/><rect x="5" y="43" width="42" height="1.5" fill="#777"/></svg><div class="a" style="left:6px;top:856px;width:52px;height:52px;border-radius:5px;background:radial-gradient(ellipse at 50% 0%,rgba(255,255,255,.28),transparent 50%),linear-gradient(#8e3a40,#702428);box-shadow:inset 0 1px 0 rgba(255,255,255,.25)"></div><svg class="a" style="left:6px;top:856px" width="52" height="52" viewBox="0 0 52 52"><path d="M11 10h30l6 26H5z" fill="#e2e2e2" stroke="#999" stroke-width=".8"/><ellipse cx="26" cy="23" rx="13" ry="8" fill="none" stroke="#b8b8b8" stroke-width="1.2"/><ellipse cx="26" cy="23" rx="3.5" ry="2" fill="none" stroke="#aaa"/><path d="M14 14c6 2 12 6 10 10" stroke="#bbb" fill="none"/><rect x="5" y="36" width="42" height="7" fill="#d8d8d8" stroke="#888" stroke-width=".6"/><rect x="8" y="38" width="14" height="3" fill="#222"/><rect x="5" y="43" width="42" height="1.5" fill="#777"/></svg><div class="a" style="left:6px;top:915px;width:52px;height:52px;border-radius:5px;background:radial-gradient(ellipse at 50% 0%,rgba(255,255,255,.28),transparent 50%),linear-gradient(#8e3a40,#702428);box-shadow:inset 0 1px 0 rgba(255,255,255,.25)"></div><svg class="a" style="left:6px;top:915px" width="52" height="52" viewBox="0 0 52 52"><path d="M11 10h30l6 26H5z" fill="#e2e2e2" stroke="#999" stroke-width=".8"/><ellipse cx="26" cy="23" rx="13" ry="8" fill="none" stroke="#b8b8b8" stroke-width="1.2"/><ellipse cx="26" cy="23" rx="3.5" ry="2" fill="none" stroke="#aaa"/><path d="M14 14c6 2 12 6 10 10" stroke="#bbb" fill="none"/><rect x="5" y="36" width="42" height="7" fill="#d8d8d8" stroke="#888" stroke-width=".6"/><rect x="8" y="38" width="14" height="3" fill="#222"/><rect x="5" y="43" width="42" height="1.5" fill="#777"/></svg><div class="a" style="left:6px;top:974px;width:52px;height:52px;border-radius:5px;background:radial-gradient(ellipse at 50% 0%,rgba(255,255,255,.28),transparent 50%),linear-gradient(#8e3a40,#702428);box-shadow:inset 0 1px 0 rgba(255,255,255,.25)"></div><svg class="a" style="left:6px;top:974px" width="52" height="52" viewBox="0 0 52 52"><path d="M11 10h30l6 26H5z" fill="#e2e2e2" stroke="#999" stroke-width=".8"/><ellipse cx="26" cy="23" rx="13" ry="8" fill="none" stroke="#b8b8b8" stroke-width="1.2"/><ellipse cx="26" cy="23" rx="3.5" ry="2" fill="none" stroke="#aaa"/><path d="M14 14c6 2 12 6 10 10" stroke="#bbb" fill="none"/><rect x="5" y="36" width="42" height="7" fill="#d8d8d8" stroke="#888" stroke-width=".6"/><rect x="8" y="38" width="14" height="3" fill="#222"/><rect x="5" y="43" width="42" height="1.5" fill="#777"/></svg><div class="a" style="left:6px;top:1028px;width:52px;height:52px;border-radius:5px;border:1px solid rgba(255,255,255,.22);background:linear-gradient(rgba(255,255,255,.14),rgba(255,255,255,.04))"></div><div class="a" style="left:8px;top:1050px;width:48px;height:30px;border-radius:4px;border:1px solid rgba(255,255,255,.2);background:rgba(255,255,255,.08)"></div><svg class="a" style="left:6px;top:1028px" width="52" height="52"><rect x="21" y="3" width="18" height="22" rx="2" fill="#e8e8e8"/><rect x="24" y="25" width="12" height="7" fill="#d0d0d0"/><path d="M30 8v10M27 12l3-4 3 4M26 15l4 3 4-3" stroke="#999" fill="none"/><path d="M14 40c4-6 28-6 32 0l-2 10H16z" fill="#dcdcdc"/><path d="M18 38l6 4 6-3 6 4 6-3" stroke="#fff" fill="none"/></svg><svg class="a" style="left:0;top:109px" width="6" height="10"><path d="M0 0L5 5L0 10z" fill="#ddd"/></svg><svg class="a" style="left:0;top:345px" width="6" height="10"><path d="M0 0L5 5L0 10z" fill="#ddd"/></svg><svg class="a" style="left:0;top:699px" width="6" height="10"><path d="M0 0L5 5L0 10z" fill="#ddd"/></svg><svg class="a" style="left:0;top:758px" width="6" height="10"><path d="M0 0L5 5L0 10z" fill="#ddd"/></svg><svg class="a" style="left:0;top:167px" width="5" height="4"><path d="M0 0L5 2L0 4z" fill="#ddd"/></svg><svg class="a" style="left:0;top:171.5px" width="5" height="4"><path d="M0 0L5 2L0 4z" fill="#ddd"/></svg><svg class="a" style="left:0;top:176px" width="5" height="4"><path d="M0 0L5 2L0 4z" fill="#ddd"/></svg><svg class="a" style="left:0;top:229px" width="5" height="4"><path d="M0 0L5 2L0 4z" fill="#ddd"/></svg><svg class="a" style="left:0;top:233px" width="5" height="4"><path d="M0 0L5 2L0 4z" fill="#ddd"/></svg><svg class="a" style="left:60px;top:228px" width="5" height="10"><path d="M5 0L0 5L5 10z" fill="#eee"/></svg><div class="a" style="left:0px;top:0px;width:1920px;height:24px;background:linear-gradient(#5b5850,#47453f 60%,#3c3b37);"></div><div class="a" style="left:0px;top:24px;width:1920px;height:5px;background:linear-gradient(rgba(0,0,0,.5),rgba(0,0,0,.2) 50%,rgba(0,0,0,0));"></div><div class="a" style="left:6px;top:4.5px;font-size:15.4px;color:#dfdbd2;white-space:nowrap;line-height:1;font-weight:bold">Terminal</div><svg class="a" style="left:1725px;top:3px" width="20" height="18"><path d="M5 1l4 5H6.5v9h-3V6H1z" fill="#dfdbd2"/><path d="M14 17l4-5h-2.5V3h-3v9H10z" fill="#dfdbd2"/></svg><div class="a" style="left:1757px;top:2px;width:20px;height:20px;background:#dfdbd2;border-radius:2px"></div><div class="a" style="left:1759px;top:6px;font-size:13px;color:#3c3b37;white-space:nowrap;line-height:1;font-weight:bold">En</div><svg class="a" style="left:1789px;top:3px" width="22" height="18"><path d="M1 6h4l5-4v14l-5-4H1z" fill="#dfdbd2"/><path d="M13 5c2 2 2 6 0 8M16 3c3 3 3 9 0 12M19 1c4 4 4 12 0 16" stroke="#dfdbd2" stroke-width="1.6" fill="none"/></svg><div class="a" style="left:1823px;top:5px;font-size:14.5px;color:#dfdbd2;white-space:nowrap;line-height:1;">11:32 PM</div><svg class="a" style="left:1894px;top:3px" width="20" height="19" viewBox="0 0 20 19"><g fill="none" stroke="#dfdbd2"><circle cx="10" cy="11" r="5.6" stroke-width="3.2" stroke-dasharray="2.6 1.8"/><circle cx="10" cy="11" r="4.8" stroke-width="1.6"/></g><rect x="8.9" y="1" width="2.2" height="9" fill="#dfdbd2" stroke="#4a4842" stroke-width="1"/></svg></body></html>
